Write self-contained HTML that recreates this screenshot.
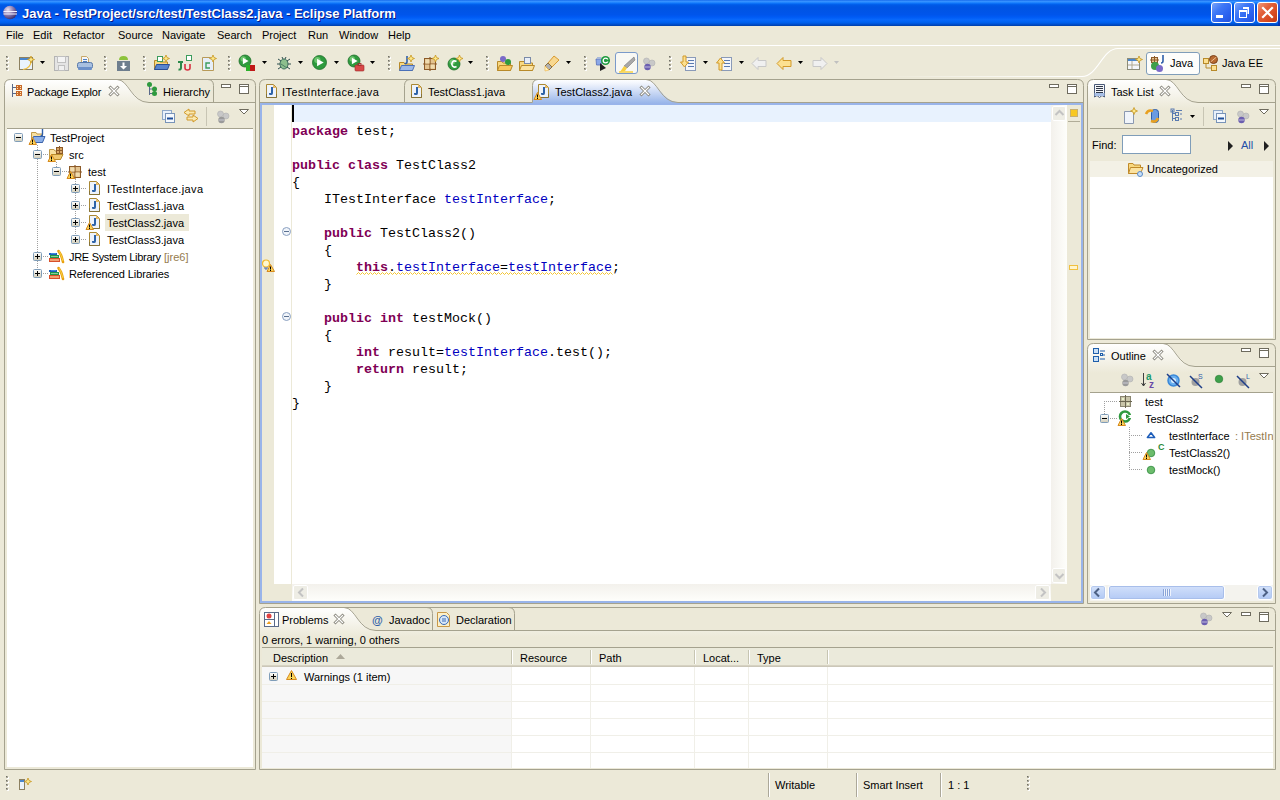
<!DOCTYPE html>
<html><head><meta charset="utf-8"><style>
*{box-sizing:border-box}
html,body{margin:0;padding:0}
body{width:1280px;height:800px;position:relative;overflow:hidden;background:#ECE9D8;font-family:"Liberation Sans",sans-serif;font-size:11px;color:#000}
.a{position:absolute}
svg.a{overflow:visible}
.t{position:absolute;white-space:nowrap;line-height:13px}
.m{position:absolute;white-space:pre;font-family:"Liberation Mono",monospace;font-size:13.33px;line-height:17px}
.kw{color:#7F0055;font-weight:bold}
.fld{color:#0000C0}
</style></head><body>
<div class="a" style="left:0;top:0;width:1280px;height:26px;background:linear-gradient(to bottom,#0A5FE8 0%,#3D95FF 4%,#2A8CFF 8%,#127AFC 12%,#0262EE 16%,#0057E5 22%,#0054E3 30%,#0055EB 56%,#005BF5 66%,#0868FC 76%,#0062EF 86%,#0054D8 92%,#0048C0 96%,#0040A8 100%)"></div>
<div class="t" style="left:22px;top:7px;font-size:13px;font-weight:bold;color:#fff;text-shadow:1px 1px 0 #0A1883">Java - TestProject/src/test/TestClass2.java - Eclipse Platform</div>
<div class="a" style="left:1211px;top:2px;width:21px;height:21px;border:1px solid #fff;border-radius:3px;background:linear-gradient(135deg,#7AA4FA 0%,#3E78F6 35%,#2A62F0 70%,#2452DC 100%)"></div>
<div class="a" style="left:1234px;top:2px;width:21px;height:21px;border:1px solid #fff;border-radius:3px;background:linear-gradient(135deg,#7AA4FA 0%,#3E78F6 35%,#2A62F0 70%,#2452DC 100%)"></div>
<div class="a" style="left:1257px;top:2px;width:21px;height:21px;border:1px solid #fff;border-radius:3px;background:linear-gradient(135deg,#F0987A 0%,#E2623C 35%,#D84A22 70%,#C23A14 100%)"></div>
<div class="a" style="left:1216px;top:15px;width:7px;height:3px;background:#fff"></div>
<svg class="a" style="left:1239px;top:7px;" width="10" height="11" viewBox="0 0 10 11"><path d="M4,0 H10 V7 H8.5 V2 H4 Z" fill="#fff"/><path d="M0,3 H8 V11 H0 Z M1,5 V10 H7 V5 Z" fill="#fff" fill-rule="evenodd"/></svg>
<svg class="a" style="left:1262px;top:7px;" width="11" height="11" viewBox="0 0 11 11"><path d="M1,1 L10,10 M10,1 L1,10" stroke="#fff" stroke-width="2.2" stroke-linecap="square"/></svg>
<div class="a" style="left:1278px;top:0px;width:2px;height:26px;background:linear-gradient(to bottom,#3A70E8,#0030B0)"></div>
<div class="t" style="left:6px;top:29px;">File</div>
<div class="t" style="left:33px;top:29px;">Edit</div>
<div class="t" style="left:63px;top:29px;">Refactor</div>
<div class="t" style="left:118px;top:29px;">Source</div>
<div class="t" style="left:162px;top:29px;">Navigate</div>
<div class="t" style="left:217px;top:29px;">Search</div>
<div class="t" style="left:262px;top:29px;">Project</div>
<div class="t" style="left:308px;top:29px;">Run</div>
<div class="t" style="left:339px;top:29px;">Window</div>
<div class="t" style="left:388px;top:29px;">Help</div>
<div class="a" style="left:0px;top:45px;width:1280px;height:1px;background:#fff"></div>
<svg class="a" style="left:4px;top:79px;" width="252" height="691" viewBox="0 0 252 691"><defs><linearGradient id="g479" x1="0" y1="0" x2="0" y2="1"><stop offset="0" stop-color="#FFFFFF"/><stop offset="1" stop-color="#ECE9D8"/></linearGradient></defs><path d="M0.5,691 V6.5 Q0.5,0.5 6.5,0.5 H245.5 Q251.5,0.5 251.5,6.5 V691" fill="#ECE9D8" stroke="none"/><path d="M0.5,30 V6.5 Q0.5,0.5 6.5,0.5 H113 C125,0.5 127,21 145,23.5 H251.5 V30 H0.5 Z" fill="url(#g479)" stroke="none"/><path d="M0.5,690.5 V6.5 Q0.5,0.5 6.5,0.5 H245.5 Q251.5,0.5 251.5,6.5 V690.5 H0.5" fill="none" stroke="#A5A28E"/><path d="M113,0.5 C125,0.5 127,23.5 145,23.5 H251.5" fill="none" stroke="#A5A28E"/><path d="M203.5,0.5 Q209.5,0.5 209.5,6.5 V23" fill="none" stroke="#A5A28E"/></svg>
<div class="a" style="left:7px;top:128px;width:246px;height:1px;background:#A5A28E"></div>
<div class="a" style="left:7px;top:129px;width:246px;height:638px;background:#fff"></div>
<svg class="a" style="left:259px;top:79px;" width="825" height="525" viewBox="0 0 825 525"><defs><linearGradient id="g25979" x1="0" y1="0" x2="0" y2="1"><stop offset="0" stop-color="#FFFFFF"/><stop offset="0.15" stop-color="#F3F6FD"/><stop offset="1" stop-color="#99B6EA"/></linearGradient></defs><path d="M0.5,525 V6.5 Q0.5,0.5 6.5,0.5 H818.5 Q824.5,0.5 824.5,6.5 V525" fill="#ECE9D8" stroke="none"/><path d="M273.5,24 V6.5 Q273.5,0.5 279.5,0.5 H387 C399,0.5 401,21 419,23.5 V24 Z" fill="url(#g25979)" stroke="none"/><path d="M0.5,524.5 V6.5 Q0.5,0.5 6.5,0.5 H818.5 Q824.5,0.5 824.5,6.5 V524.5 H0.5" fill="none" stroke="#A5A28E"/><path d="M387,0.5 C399,0.5 401,23.5 419,23.5 H824.5" fill="none" stroke="#A5A28E"/><path d="M0.5,23.5 H273.5 V6.5 Q273.5,0.5 279.5,0.5" fill="none" stroke="#A5A28E"/><path d="M145.5,23 V6.5 Q145.5,0.5 151.5,0.5" fill="none" stroke="#A5A28E"/></svg>
<div class="a" style="left:260px;top:103px;width:823px;height:500px;background:#99B4EA"></div>
<div class="a" style="left:262px;top:105px;width:819px;height:496px;background:#fff"></div>
<svg class="a" style="left:1087px;top:79px;" width="189" height="261" viewBox="0 0 189 261"><defs><linearGradient id="g108779" x1="0" y1="0" x2="0" y2="1"><stop offset="0" stop-color="#FFFFFF"/><stop offset="1" stop-color="#ECE9D8"/></linearGradient></defs><path d="M0.5,261 V6.5 Q0.5,0.5 6.5,0.5 H182.5 Q188.5,0.5 188.5,6.5 V261" fill="#ECE9D8" stroke="none"/><path d="M0.5,30 V6.5 Q0.5,0.5 6.5,0.5 H79 C91,0.5 93,21 111,23.5 H188.5 V30 H0.5 Z" fill="url(#g108779)" stroke="none"/><path d="M0.5,260.5 V6.5 Q0.5,0.5 6.5,0.5 H182.5 Q188.5,0.5 188.5,6.5 V260.5 H0.5" fill="none" stroke="#A5A28E"/><path d="M79,0.5 C91,0.5 93,23.5 111,23.5 H188.5" fill="none" stroke="#A5A28E"/></svg>
<svg class="a" style="left:1087px;top:343px;" width="189" height="261" viewBox="0 0 189 261"><defs><linearGradient id="g1087343" x1="0" y1="0" x2="0" y2="1"><stop offset="0" stop-color="#FFFFFF"/><stop offset="1" stop-color="#ECE9D8"/></linearGradient></defs><path d="M0.5,261 V6.5 Q0.5,0.5 6.5,0.5 H182.5 Q188.5,0.5 188.5,6.5 V261" fill="#ECE9D8" stroke="none"/><path d="M0.5,30 V6.5 Q0.5,0.5 6.5,0.5 H76 C88,0.5 90,21 108,23.5 H188.5 V30 H0.5 Z" fill="url(#g1087343)" stroke="none"/><path d="M0.5,260.5 V6.5 Q0.5,0.5 6.5,0.5 H182.5 Q188.5,0.5 188.5,6.5 V260.5 H0.5" fill="none" stroke="#A5A28E"/><path d="M76,0.5 C88,0.5 90,23.5 108,23.5 H188.5" fill="none" stroke="#A5A28E"/></svg>
<svg class="a" style="left:259px;top:607px;" width="1017" height="163" viewBox="0 0 1017 163"><defs><linearGradient id="g259607" x1="0" y1="0" x2="0" y2="1"><stop offset="0" stop-color="#FFFFFF"/><stop offset="1" stop-color="#ECE9D8"/></linearGradient></defs><path d="M0.5,163 V6.5 Q0.5,0.5 6.5,0.5 H1010.5 Q1016.5,0.5 1016.5,6.5 V163" fill="#ECE9D8" stroke="none"/><path d="M0.5,30 V6.5 Q0.5,0.5 6.5,0.5 H85 C97,0.5 99,21 117,23.5 H1016.5 V30 H0.5 Z" fill="url(#g259607)" stroke="none"/><path d="M0.5,162.5 V6.5 Q0.5,0.5 6.5,0.5 H1010.5 Q1016.5,0.5 1016.5,6.5 V162.5 H0.5" fill="none" stroke="#A5A28E"/><path d="M85,0.5 C97,0.5 99,23.5 117,23.5 H1016.5" fill="none" stroke="#A5A28E"/><path d="M167.5,0.5 Q173.5,0.5 173.5,6.5 V23" fill="none" stroke="#A5A28E"/><path d="M249.5,0.5 Q255.5,0.5 255.5,6.5 V23" fill="none" stroke="#A5A28E"/></svg>
<svg class="a" style="left:6px;top:56px;" width="3" height="15" viewBox="0 0 3 15"><rect x="1" y="1" width="2" height="2" fill="#FFFFFF"/><rect x="0" y="0" width="2" height="2" fill="#A8A596"/><rect x="0" y="0" width="1" height="1" fill="#707068"/><rect x="1" y="5" width="2" height="2" fill="#FFFFFF"/><rect x="0" y="4" width="2" height="2" fill="#A8A596"/><rect x="0" y="4" width="1" height="1" fill="#707068"/><rect x="1" y="9" width="2" height="2" fill="#FFFFFF"/><rect x="0" y="8" width="2" height="2" fill="#A8A596"/><rect x="0" y="8" width="1" height="1" fill="#707068"/><rect x="1" y="13" width="2" height="2" fill="#FFFFFF"/><rect x="0" y="12" width="2" height="2" fill="#A8A596"/><rect x="0" y="12" width="1" height="1" fill="#707068"/></svg>
<svg class="a" style="left:104px;top:56px;" width="3" height="15" viewBox="0 0 3 15"><rect x="1" y="1" width="2" height="2" fill="#FFFFFF"/><rect x="0" y="0" width="2" height="2" fill="#A8A596"/><rect x="0" y="0" width="1" height="1" fill="#707068"/><rect x="1" y="5" width="2" height="2" fill="#FFFFFF"/><rect x="0" y="4" width="2" height="2" fill="#A8A596"/><rect x="0" y="4" width="1" height="1" fill="#707068"/><rect x="1" y="9" width="2" height="2" fill="#FFFFFF"/><rect x="0" y="8" width="2" height="2" fill="#A8A596"/><rect x="0" y="8" width="1" height="1" fill="#707068"/><rect x="1" y="13" width="2" height="2" fill="#FFFFFF"/><rect x="0" y="12" width="2" height="2" fill="#A8A596"/><rect x="0" y="12" width="1" height="1" fill="#707068"/></svg>
<svg class="a" style="left:143px;top:56px;" width="3" height="15" viewBox="0 0 3 15"><rect x="1" y="1" width="2" height="2" fill="#FFFFFF"/><rect x="0" y="0" width="2" height="2" fill="#A8A596"/><rect x="0" y="0" width="1" height="1" fill="#707068"/><rect x="1" y="5" width="2" height="2" fill="#FFFFFF"/><rect x="0" y="4" width="2" height="2" fill="#A8A596"/><rect x="0" y="4" width="1" height="1" fill="#707068"/><rect x="1" y="9" width="2" height="2" fill="#FFFFFF"/><rect x="0" y="8" width="2" height="2" fill="#A8A596"/><rect x="0" y="8" width="1" height="1" fill="#707068"/><rect x="1" y="13" width="2" height="2" fill="#FFFFFF"/><rect x="0" y="12" width="2" height="2" fill="#A8A596"/><rect x="0" y="12" width="1" height="1" fill="#707068"/></svg>
<svg class="a" style="left:228px;top:56px;" width="3" height="15" viewBox="0 0 3 15"><rect x="1" y="1" width="2" height="2" fill="#FFFFFF"/><rect x="0" y="0" width="2" height="2" fill="#A8A596"/><rect x="0" y="0" width="1" height="1" fill="#707068"/><rect x="1" y="5" width="2" height="2" fill="#FFFFFF"/><rect x="0" y="4" width="2" height="2" fill="#A8A596"/><rect x="0" y="4" width="1" height="1" fill="#707068"/><rect x="1" y="9" width="2" height="2" fill="#FFFFFF"/><rect x="0" y="8" width="2" height="2" fill="#A8A596"/><rect x="0" y="8" width="1" height="1" fill="#707068"/><rect x="1" y="13" width="2" height="2" fill="#FFFFFF"/><rect x="0" y="12" width="2" height="2" fill="#A8A596"/><rect x="0" y="12" width="1" height="1" fill="#707068"/></svg>
<svg class="a" style="left:388px;top:56px;" width="3" height="15" viewBox="0 0 3 15"><rect x="1" y="1" width="2" height="2" fill="#FFFFFF"/><rect x="0" y="0" width="2" height="2" fill="#A8A596"/><rect x="0" y="0" width="1" height="1" fill="#707068"/><rect x="1" y="5" width="2" height="2" fill="#FFFFFF"/><rect x="0" y="4" width="2" height="2" fill="#A8A596"/><rect x="0" y="4" width="1" height="1" fill="#707068"/><rect x="1" y="9" width="2" height="2" fill="#FFFFFF"/><rect x="0" y="8" width="2" height="2" fill="#A8A596"/><rect x="0" y="8" width="1" height="1" fill="#707068"/><rect x="1" y="13" width="2" height="2" fill="#FFFFFF"/><rect x="0" y="12" width="2" height="2" fill="#A8A596"/><rect x="0" y="12" width="1" height="1" fill="#707068"/></svg>
<svg class="a" style="left:486px;top:56px;" width="3" height="15" viewBox="0 0 3 15"><rect x="1" y="1" width="2" height="2" fill="#FFFFFF"/><rect x="0" y="0" width="2" height="2" fill="#A8A596"/><rect x="0" y="0" width="1" height="1" fill="#707068"/><rect x="1" y="5" width="2" height="2" fill="#FFFFFF"/><rect x="0" y="4" width="2" height="2" fill="#A8A596"/><rect x="0" y="4" width="1" height="1" fill="#707068"/><rect x="1" y="9" width="2" height="2" fill="#FFFFFF"/><rect x="0" y="8" width="2" height="2" fill="#A8A596"/><rect x="0" y="8" width="1" height="1" fill="#707068"/><rect x="1" y="13" width="2" height="2" fill="#FFFFFF"/><rect x="0" y="12" width="2" height="2" fill="#A8A596"/><rect x="0" y="12" width="1" height="1" fill="#707068"/></svg>
<svg class="a" style="left:584px;top:56px;" width="3" height="15" viewBox="0 0 3 15"><rect x="1" y="1" width="2" height="2" fill="#FFFFFF"/><rect x="0" y="0" width="2" height="2" fill="#A8A596"/><rect x="0" y="0" width="1" height="1" fill="#707068"/><rect x="1" y="5" width="2" height="2" fill="#FFFFFF"/><rect x="0" y="4" width="2" height="2" fill="#A8A596"/><rect x="0" y="4" width="1" height="1" fill="#707068"/><rect x="1" y="9" width="2" height="2" fill="#FFFFFF"/><rect x="0" y="8" width="2" height="2" fill="#A8A596"/><rect x="0" y="8" width="1" height="1" fill="#707068"/><rect x="1" y="13" width="2" height="2" fill="#FFFFFF"/><rect x="0" y="12" width="2" height="2" fill="#A8A596"/><rect x="0" y="12" width="1" height="1" fill="#707068"/></svg>
<svg class="a" style="left:669px;top:56px;" width="3" height="15" viewBox="0 0 3 15"><rect x="1" y="1" width="2" height="2" fill="#FFFFFF"/><rect x="0" y="0" width="2" height="2" fill="#A8A596"/><rect x="0" y="0" width="1" height="1" fill="#707068"/><rect x="1" y="5" width="2" height="2" fill="#FFFFFF"/><rect x="0" y="4" width="2" height="2" fill="#A8A596"/><rect x="0" y="4" width="1" height="1" fill="#707068"/><rect x="1" y="9" width="2" height="2" fill="#FFFFFF"/><rect x="0" y="8" width="2" height="2" fill="#A8A596"/><rect x="0" y="8" width="1" height="1" fill="#707068"/><rect x="1" y="13" width="2" height="2" fill="#FFFFFF"/><rect x="0" y="12" width="2" height="2" fill="#A8A596"/><rect x="0" y="12" width="1" height="1" fill="#707068"/></svg>
<svg class="a" style="left:19px;top:56px;" width="16" height="16" viewBox="0 0 16 16"><rect x="0.5" y="1.5" width="13" height="12" fill="#EAF3FC" stroke="#8C8060"/><rect x="1" y="2" width="12" height="2" fill="#4A86CC"/><path d="M12,5 Q12,12 4,13.5" fill="none" stroke="#F0C040" stroke-width="1.2"/><path d="M12,0.0 L13,2.5 L15.5,3.5 L13,4.5 L12,7.0 L11,4.5 L8.5,3.5 L11,2.5 Z" fill="#FCE88A" stroke="#C8961E" stroke-width="0.8"/></svg>
<svg class="a" style="left:40px;top:61px;" width="5" height="3" viewBox="0 0 5 3"><path d="M0,0 H5 L2.5,3 Z" fill="#000"/></svg>
<svg class="a" style="left:54px;top:56px;" width="16" height="16" viewBox="0 0 16 16"><rect x="0.5" y="0.5" width="14" height="14" fill="#E4E4E4" stroke="#B4B4B4"/><rect x="3.5" y="0.5" width="8" height="6" fill="#F4F4F4" stroke="#C0C0C0"/><rect x="4.5" y="9.5" width="6" height="5" fill="#F0F0F0" stroke="#C0C0C0"/></svg>
<svg class="a" style="left:77px;top:56px;" width="16" height="16" viewBox="0 0 16 16"><path d="M4.5,0.5 H9.5 L11.5,2.5 V7.5 H4.5 Z" fill="#F4F6FA" stroke="#C8A868"/><rect x="6" y="3" width="4" height="1" fill="#5080C0"/><rect x="6" y="5" width="4" height="1" fill="#5080C0"/><rect x="0.5" y="6.5" width="15" height="6" rx="2" fill="#A8C0E0" stroke="#5878A8"/><rect x="1" y="11" width="14" height="3" rx="1" fill="#6C90C8"/></svg>
<svg class="a" style="left:117px;top:55px;" width="16" height="16" viewBox="0 0 16 16"><path d="M2,5 Q2,1 6.5,1 Q11,1 11,5 Z" fill="#8DC33C"/><rect x="0" y="6" width="13" height="10" fill="#6E7E8E"/><path d="M5.5,7.5 H7.5 V11 H10 L6.5,14.5 L3,11 H5.5 Z" fill="#FFF"/></svg>
<svg class="a" style="left:154px;top:55px;" width="16" height="16" viewBox="0 0 16 16"><path d="M0.5,5.5 H5 L6,7 H13.5 V14.5 H0.5 Z" fill="#F8D880" stroke="#B88A2A"/><path d="M2.5,9.5 H15.5 L13.5,14.5 H0.5 Z" fill="#5884CC" stroke="#2A4E98"/><rect x="3.5" y="1.5" width="5" height="5" fill="#FFF" stroke="#3C9C5C"/><path d="M12,0.0 L13,2.5 L15.5,3.5 L13,4.5 L12,7.0 L11,4.5 L8.5,3.5 L11,2.5 Z" fill="#FCE88A" stroke="#C8961E" stroke-width="0.8"/></svg>
<svg class="a" style="left:177px;top:55px;" width="16" height="16" viewBox="0 0 16 16"><path d="M1,7 H6 M4,7 V13 Q4,15 1.5,14.5" fill="none" stroke="#2A8A4A" stroke-width="2"/><path d="M8,9 V13 Q8,15 10.5,15 Q13,15 13,13 V9" fill="none" stroke="#D83040" stroke-width="1.6"/><rect x="9.5" y="0.5" width="5" height="5" fill="#FFF" stroke="#3C9C5C"/></svg>
<svg class="a" style="left:202px;top:55px;" width="16" height="16" viewBox="0 0 16 16"><path d="M0.5,2.5 H8.5 L11.5,5.5 V15.5 H0.5 Z" fill="#E6EEF8" stroke="#B89A58"/><path d="M8,8 H4 V13 H8" fill="none" stroke="#3C9C5C" stroke-width="1.4"/><path d="M11,0.0 L12,2.5 L14.5,3.5 L12,4.5 L11,7.0 L10,4.5 L7.5,3.5 L10,2.5 Z" fill="#FCE88A" stroke="#C8961E" stroke-width="0.8"/></svg>
<svg class="a" style="left:239px;top:55px;" width="16" height="16" viewBox="0 0 16 16"><circle cx="6" cy="6" r="6" fill="#2E9A3E" stroke="#1E6E2A" stroke-width="0.8"/><circle cx="4.2" cy="3.9000000000000004" r="2.7" fill="#7CD07A" opacity="0.8"/><path d="M3.9000000000000004,2.6999999999999997 L9.6,6 L3.9000000000000004,9.3 Z" fill="#FFF"/><rect x="7" y="10" width="5" height="6" fill="#2AB02A"/><rect x="11" y="10" width="5" height="6" fill="#C01818"/></svg>
<svg class="a" style="left:262px;top:61px;" width="5" height="3" viewBox="0 0 5 3"><path d="M0,0 H5 L2.5,3 Z" fill="#000"/></svg>
<svg class="a" style="left:276px;top:55px;" width="16" height="16" viewBox="0 0 16 16"><ellipse cx="8" cy="9" rx="4" ry="5" fill="#8DBF8D" stroke="#3C6E5C"/><path d="M2,4 L5,6 M14,4 L11,6 M1,9 H4 M15,9 H12 M2,14 L5,12 M14,14 L11,12 M6,2 L7,4 M10,2 L9,4" stroke="#2E4E4E" stroke-width="1"/><path d="M5,9 L11,13" stroke="#3C6E5C" stroke-width="0.8"/></svg>
<svg class="a" style="left:298px;top:61px;" width="5" height="3" viewBox="0 0 5 3"><path d="M0,0 H5 L2.5,3 Z" fill="#000"/></svg>
<svg class="a" style="left:312px;top:55px;" width="16" height="16" viewBox="0 0 16 16"><circle cx="7.5" cy="7.5" r="7" fill="#2E9A3E" stroke="#1E6E2A" stroke-width="0.8"/><circle cx="5.4" cy="5.050000000000001" r="3.15" fill="#7CD07A" opacity="0.8"/><path d="M5.050000000000001,3.6499999999999995 L11.7,7.5 L5.050000000000001,11.350000000000001 Z" fill="#FFF"/></svg>
<svg class="a" style="left:334px;top:61px;" width="5" height="3" viewBox="0 0 5 3"><path d="M0,0 H5 L2.5,3 Z" fill="#000"/></svg>
<svg class="a" style="left:348px;top:55px;" width="16" height="16" viewBox="0 0 16 16"><circle cx="6" cy="6" r="6" fill="#2E9A3E" stroke="#1E6E2A" stroke-width="0.8"/><circle cx="4.2" cy="3.9000000000000004" r="2.7" fill="#7CD07A" opacity="0.8"/><path d="M3.9000000000000004,2.6999999999999997 L9.6,6 L3.9000000000000004,9.3 Z" fill="#FFF"/><rect x="7" y="10" width="9" height="6" rx="1" fill="#D84848" stroke="#A02828" stroke-width="0.6"/><rect x="10" y="8.5" width="3" height="2" fill="none" stroke="#A02828" stroke-width="0.8"/></svg>
<svg class="a" style="left:370px;top:61px;" width="5" height="3" viewBox="0 0 5 3"><path d="M0,0 H5 L2.5,3 Z" fill="#000"/></svg>
<svg class="a" style="left:399px;top:55px;" width="16" height="16" viewBox="0 0 16 16"><path d="M0.5,7.5 H5 L6,9 H13.5 V15.5 H0.5 Z" fill="#F8D880" stroke="#B88A2A"/><path d="M2.5,10.5 H15.5 L13.5,15.5 H0.5 Z" fill="#9CB8E8" stroke="#4A70B8"/><path d="M8,1 V7 Q8,8.5 6.5,8.5 H5.5" fill="none" stroke="#2E5EA8" stroke-width="1.6"/><path d="M12,0.0 L13,2.5 L15.5,3.5 L13,4.5 L12,7.0 L11,4.5 L8.5,3.5 L11,2.5 Z" fill="#FCE88A" stroke="#C8961E" stroke-width="0.8"/></svg>
<svg class="a" style="left:423px;top:55px;" width="16" height="16" viewBox="0 0 16 16"><rect x="1.5" y="3.5" width="11" height="11" fill="#E4C490" stroke="#8C5A28"/><path d="M7,2 V16 M0,9 H14" stroke="#8C5A28" stroke-width="1.2"/><rect x="2.5" y="4.5" width="4" height="4" fill="#F0DCB0"/><rect x="7.5" y="9.5" width="4" height="4" fill="#F0DCB0"/><path d="M12.5,0.0 L13.5,2.5 L16.0,3.5 L13.5,4.5 L12.5,7.0 L11.5,4.5 L9.0,3.5 L11.5,2.5 Z" fill="#FCE88A" stroke="#C8961E" stroke-width="0.8"/></svg>
<svg class="a" style="left:447px;top:55px;" width="16" height="16" viewBox="0 0 16 16"><circle cx="7" cy="9" r="6" fill="#2E9A3E" stroke="#1E6E2A" stroke-width="0.8"/><circle cx="5.2" cy="6.9" r="2.7" fill="#7CD07A" opacity="0.8"/><path d="M9.5,6.5 Q7,5 5.5,7 Q4,9 5.5,11 Q7,13 9.5,11.5" fill="none" stroke="#FFF" stroke-width="1.6"/><path d="M12.5,0.0 L13.5,2.5 L16.0,3.5 L13.5,4.5 L12.5,7.0 L11.5,4.5 L9.0,3.5 L11.5,2.5 Z" fill="#FCE88A" stroke="#C8961E" stroke-width="0.8"/></svg>
<svg class="a" style="left:468px;top:61px;" width="5" height="3" viewBox="0 0 5 3"><path d="M0,0 H5 L2.5,3 Z" fill="#000"/></svg>
<svg class="a" style="left:497px;top:55px;" width="16" height="16" viewBox="0 0 16 16"><path d="M0.5,6.5 H5 L6,8 H13.5 V15.5 H0.5 Z" fill="#F8D880" stroke="#B88A2A"/><path d="M2.5,10.5 H15.5 L13.5,15.5 H0.5 Z" fill="#F8C860" stroke="#B88A2A"/><circle cx="6" cy="4" r="3" fill="#7A6AC8"/><circle cx="11" cy="7" r="3" fill="#2E9A3E"/></svg>
<svg class="a" style="left:519px;top:55px;" width="16" height="16" viewBox="0 0 16 16"><path d="M0.5,6.5 H5 L6,8 H13.5 V15.5 H0.5 Z" fill="#F8D880" stroke="#B88A2A"/><path d="M2.5,10.5 H15.5 L13.5,15.5 H0.5 Z" fill="#FBE2A0" stroke="#B88A2A"/><rect x="5.5" y="2.5" width="6" height="6" fill="#E8EEF8" stroke="#7A8AA8"/></svg>
<svg class="a" style="left:544px;top:55px;" width="16" height="16" viewBox="0 0 16 16"><path d="M10,1 L15,5 L8,12 L4,8 Z" fill="#F8D890" stroke="#D89A30"/><path d="M4,8 L8,12 L5,15 L1,11 Z" fill="#B0B0B0" stroke="#8A7040"/><path d="M1,11 L5,15 L1,16 Z" fill="#FFF4C0" stroke="#F0B040" stroke-width="0.6"/></svg>
<svg class="a" style="left:566px;top:61px;" width="5" height="3" viewBox="0 0 5 3"><path d="M0,0 H5 L2.5,3 Z" fill="#000"/></svg>
<svg class="a" style="left:595px;top:55px;" width="16" height="16" viewBox="0 0 16 16"><path d="M1,4 H7 L6.5,10 H1.5 Z" fill="#8AA8E8" stroke="#5A70B8" stroke-width="0.8"/><rect x="2" y="2" width="4" height="2" fill="#A8B8D8"/><path d="M5,8 L11,13 L5,16 Z" fill="#202020"/><circle cx="10.5" cy="5.5" r="4.5" fill="#1E9A3E"/><circle cx="10.5" cy="5.5" r="2.3" fill="none" stroke="#FFF" stroke-width="1.3"/><rect x="11" y="4.5" width="4" height="2" fill="#1E9A3E"/></svg>
<div class="a" style="left:615px;top:52px;width:23px;height:22px;border:1px solid #7A9ACA;border-radius:3px;background:#F8F8F4"></div>
<svg class="a" style="left:619px;top:56px;" width="16" height="16" viewBox="0 0 16 16"><path d="M15,1 L16,4 L8,12 L5,10 Z" fill="#A8A8A8" stroke="#787878" stroke-width="0.6"/><path d="M5,10 L8,12 L6,15 L1,16 Z" fill="#F8D040"/><path d="M0,16 H14" stroke="#F8D040" stroke-width="1.5"/></svg>
<svg class="a" style="left:642px;top:57px;" width="16" height="16" viewBox="0 0 16 16"><circle cx="4.5" cy="4" r="3" fill="#C8C8C8" stroke="#B0B0B0" stroke-width="0.6"/><circle cx="10" cy="6" r="3" fill="#C8C8C8" stroke="#B0B0B0" stroke-width="0.6"/><circle cx="5.5" cy="10" r="3.2" fill="#6C5FB0"/><rect x="3" y="9.5" width="5" height="1" fill="#E0E0F0" opacity="0.7"/></svg>
<svg class="a" style="left:680px;top:55px;" width="16" height="16" viewBox="0 0 16 16"><rect x="5.5" y="2.5" width="10" height="13" fill="#F4F6FA" stroke="#8A9AB8"/><rect x="8" y="5" width="6" height="1" fill="#5A7AB0"/><rect x="8" y="8" width="6" height="1" fill="#5A7AB0"/><rect x="8" y="11" width="6" height="1" fill="#5A7AB0"/><path d="M3,1 H6 V7 H8.5 L4.5,12 L0.5,7 H3 Z" fill="#FCE090" stroke="#D29A2A"/></svg>
<svg class="a" style="left:703px;top:61px;" width="5" height="3" viewBox="0 0 5 3"><path d="M0,0 H5 L2.5,3 Z" fill="#000"/></svg>
<svg class="a" style="left:716px;top:55px;" width="16" height="16" viewBox="0 0 16 16"><rect x="5.5" y="2.5" width="10" height="13" fill="#F4F6FA" stroke="#8A9AB8"/><rect x="8" y="5" width="6" height="1" fill="#5A7AB0"/><rect x="8" y="8" width="6" height="1" fill="#5A7AB0"/><rect x="8" y="11" width="6" height="1" fill="#5A7AB0"/><path d="M3,15 H6 V8 H8.5 L4.5,3 L0.5,8 H3 Z" fill="#FCE090" stroke="#D29A2A"/></svg>
<svg class="a" style="left:739px;top:61px;" width="5" height="3" viewBox="0 0 5 3"><path d="M0,0 H5 L2.5,3 Z" fill="#000"/></svg>
<svg class="a" style="left:751px;top:56px;" width="16" height="16" viewBox="0 0 16 16"><path d="M7,1.5 L1,7.5 L7,13.5 V10.5 H15 V4.5 H7 Z" fill="#F0F0F0" stroke="#C8C8C8" stroke-linejoin="round"/></svg>
<svg class="a" style="left:776px;top:56px;" width="16" height="16" viewBox="0 0 16 16"><path d="M7,1.5 L1,7.5 L7,13.5 V10.5 H15 V4.5 H7 Z" fill="#FCE090" stroke="#D29A2A" stroke-linejoin="round"/></svg>
<svg class="a" style="left:798px;top:61px;" width="5" height="3" viewBox="0 0 5 3"><path d="M0,0 H5 L2.5,3 Z" fill="#000"/></svg>
<svg class="a" style="left:812px;top:56px;" width="16" height="16" viewBox="0 0 16 16"><path d="M9,1.5 L15,7.5 L9,13.5 V10.5 H1 V4.5 H9 Z" fill="#F0F0F0" stroke="#C8C8C8" stroke-linejoin="round"/></svg>
<svg class="a" style="left:834px;top:61px;" width="5" height="3" viewBox="0 0 5 3"><path d="M0,0 H5 L2.5,3 Z" fill="#C0C0C0"/></svg>
<svg class="a" style="left:860px;top:46px;" width="420" height="33" viewBox="0 0 420 33"><defs><linearGradient id="pfade" x1="0" y1="0" x2="1" y2="0"><stop offset="0" stop-color="#FFF" stop-opacity="0"/><stop offset="1" stop-color="#FFF" stop-opacity="1"/></linearGradient></defs><rect x="20" y="30" width="202" height="1" fill="url(#pfade)"/><path d="M222,30.5 C238,30.5 242,2.5 258,2.5 H420" fill="none" stroke="#FFFFFF" stroke-width="1.2"/></svg>
<svg class="a" style="left:1127px;top:56px;" width="16" height="16" viewBox="0 0 16 16"><rect x="0.5" y="2.5" width="12" height="11" fill="#F4F6FA" stroke="#8C8C78"/><rect x="1" y="3" width="11" height="2" fill="#4A86CC"/><path d="M5,5 V13 M1,9 H12" stroke="#B0A890"/><path d="M12,0.0 L13,2.5 L15.5,3.5 L13,4.5 L12,7.0 L11,4.5 L8.5,3.5 L11,2.5 Z" fill="#FCE88A" stroke="#C8961E" stroke-width="0.8"/></svg>
<div class="a" style="left:1146px;top:52px;width:54px;height:23px;border:1px solid #7F9DB9;border-radius:3px;background:#FDFDFB"></div>
<svg class="a" style="left:1150px;top:55px;" width="16" height="16" viewBox="0 0 16 16"><rect x="1.5" y="2.5" width="6" height="5" fill="#E4C490" stroke="#8C5A28"/><path d="M4.5,1 V8 M0,5 H9" stroke="#8C5A28"/><circle cx="5" cy="11" r="4" fill="#3EA04A"/><circle cx="9.5" cy="13.5" r="3.5" fill="#7A6AC8"/><path d="M13,0 V6 Q13,8 11,8" fill="none" stroke="#2E5EA8" stroke-width="1.6"/></svg>
<div class="t" style="left:1170px;top:57px;">Java</div>
<svg class="a" style="left:1203px;top:55px;" width="16" height="16" viewBox="0 0 16 16"><rect x="0.5" y="3.5" width="5" height="5" fill="#FCE090" stroke="#B88A2A"/><rect x="8.5" y="10.5" width="5" height="5" fill="#FCE090" stroke="#B88A2A"/><path d="M3,9 V13 H8" stroke="#B88A2A" fill="none"/><ellipse cx="10.5" cy="4.5" rx="4" ry="4" fill="#B86A30" stroke="#7A4018"/><path d="M7.5,7 Q10.5,4.5 13.5,2" stroke="#F0C090"/></svg>
<div class="t" style="left:1222px;top:57px;">Java EE</div>
<svg class="a" style="left:12px;top:84px;" width="11" height="14" viewBox="0 0 11 14"><path d="M0.5,0 V13 M0.5,3.5 H4 M0.5,9.5 H4" stroke="#5A6A8A"/><rect x="4" y="1" width="6" height="5" fill="#C8682A"/><rect x="4" y="7" width="6" height="5" fill="#C8682A"/><rect x="5" y="2" width="1" height="1" fill="#FFE8B0"/><rect x="8" y="2" width="1" height="1" fill="#FFE8B0"/><rect x="5" y="4" width="1" height="1" fill="#FFE8B0"/><rect x="8" y="4" width="1" height="1" fill="#FFE8B0"/><rect x="5" y="8" width="1" height="1" fill="#FFE8B0"/><rect x="8" y="8" width="1" height="1" fill="#FFE8B0"/><rect x="5" y="10" width="1" height="1" fill="#FFE8B0"/><rect x="8" y="10" width="1" height="1" fill="#FFE8B0"/></svg>
<div class="t" style="left:27px;top:86px;letter-spacing:-0.2px">Package Explor</div>
<svg class="a" style="left:109px;top:86px;" width="10" height="10" viewBox="0 0 10 10"><path d="M1.5,1.5 L8.5,8.5 M8.5,1.5 L1.5,8.5" stroke="#8C8A80" stroke-width="3" stroke-linecap="square"/><path d="M1.5,1.5 L8.5,8.5 M8.5,1.5 L1.5,8.5" stroke="#FFFFFF" stroke-width="1.2" stroke-linecap="square"/></svg>
<svg class="a" style="left:147px;top:82px;" width="10" height="16" viewBox="0 0 10 16"><path d="M2.5,2 V13 M2.5,7 H6 M2.5,11.5 H6" stroke="#5A6A8A"/><circle cx="2.5" cy="2.5" r="2.5" fill="#2E9A3E"/><circle cx="7.5" cy="7" r="2.5" fill="#2E9A3E"/><circle cx="7.5" cy="11.5" r="2.5" fill="#2E9A3E"/></svg>
<div class="t" style="left:163px;top:86px;">Hierarchy</div>
<svg class="a" style="left:221px;top:84px;" width="10" height="4" viewBox="0 0 10 4"><rect x="0.5" y="0.5" width="9" height="3" fill="#FFF" stroke="#6E6B5E"/></svg>
<svg class="a" style="left:239px;top:84px;" width="10" height="10" viewBox="0 0 10 10"><rect x="0.5" y="0.5" width="9" height="9" fill="#FFF" stroke="#6E6B5E"/><rect x="1" y="2" width="8" height="1" fill="#6E6B5E"/></svg>
<svg class="a" style="left:162px;top:110px;" width="13" height="13" viewBox="0 0 13 13"><rect x="0.5" y="0.5" width="9" height="9" fill="#E8F0FA" stroke="#8FA8C8"/><rect x="3.5" y="3.5" width="9" height="9" fill="#F4F8FD" stroke="#7893B8"/><rect x="5" y="7.5" width="6" height="2" fill="#1E4E9A"/></svg>
<svg class="a" style="left:183px;top:108px;" width="16" height="16" viewBox="0 0 16 16"><path d="M6,1 L1,4.5 L6,8 V6 H12 V3 H6 Z" fill="#FBE9B0" stroke="#D29A2A"/><path d="M10,7 L15,10.5 L10,14 V12 H4 V9 H10 Z" fill="#FBE9B0" stroke="#D29A2A"/></svg>
<div class="a" style="left:206px;top:107px;width:1px;height:19px;background:#C8C5B4"></div>
<svg class="a" style="left:216px;top:110px;" width="14" height="14" viewBox="0 0 14 14"><circle cx="4.5" cy="4" r="3" fill="#C8C8C8" stroke="#B0B0B0" stroke-width="0.6"/><circle cx="10" cy="6" r="3" fill="#C8C8C8" stroke="#B0B0B0" stroke-width="0.6"/><circle cx="5.5" cy="10" r="3.2" fill="#9A9A9A"/><rect x="3" y="9.5" width="5" height="1" fill="#E0E0F0" opacity="0.7"/></svg>
<svg class="a" style="left:239px;top:109px;" width="10" height="6" viewBox="0 0 10 6"><path d="M0.5,0.5 H9.5 L5,5 Z" fill="#FFF" stroke="#6E6B5E" stroke-linejoin="round"/></svg>
<svg class="a" style="left:37px;top:145px;" width="1" height="130" viewBox="0 0 1 130"><rect x="0" y="0" width="1" height="1" fill="#A0A0A0"/><rect x="0" y="2" width="1" height="1" fill="#A0A0A0"/><rect x="0" y="4" width="1" height="1" fill="#A0A0A0"/><rect x="0" y="6" width="1" height="1" fill="#A0A0A0"/><rect x="0" y="8" width="1" height="1" fill="#A0A0A0"/><rect x="0" y="10" width="1" height="1" fill="#A0A0A0"/><rect x="0" y="12" width="1" height="1" fill="#A0A0A0"/><rect x="0" y="14" width="1" height="1" fill="#A0A0A0"/><rect x="0" y="16" width="1" height="1" fill="#A0A0A0"/><rect x="0" y="18" width="1" height="1" fill="#A0A0A0"/><rect x="0" y="20" width="1" height="1" fill="#A0A0A0"/><rect x="0" y="22" width="1" height="1" fill="#A0A0A0"/><rect x="0" y="24" width="1" height="1" fill="#A0A0A0"/><rect x="0" y="26" width="1" height="1" fill="#A0A0A0"/><rect x="0" y="28" width="1" height="1" fill="#A0A0A0"/><rect x="0" y="30" width="1" height="1" fill="#A0A0A0"/><rect x="0" y="32" width="1" height="1" fill="#A0A0A0"/><rect x="0" y="34" width="1" height="1" fill="#A0A0A0"/><rect x="0" y="36" width="1" height="1" fill="#A0A0A0"/><rect x="0" y="38" width="1" height="1" fill="#A0A0A0"/><rect x="0" y="40" width="1" height="1" fill="#A0A0A0"/><rect x="0" y="42" width="1" height="1" fill="#A0A0A0"/><rect x="0" y="44" width="1" height="1" fill="#A0A0A0"/><rect x="0" y="46" width="1" height="1" fill="#A0A0A0"/><rect x="0" y="48" width="1" height="1" fill="#A0A0A0"/><rect x="0" y="50" width="1" height="1" fill="#A0A0A0"/><rect x="0" y="52" width="1" height="1" fill="#A0A0A0"/><rect x="0" y="54" width="1" height="1" fill="#A0A0A0"/><rect x="0" y="56" width="1" height="1" fill="#A0A0A0"/><rect x="0" y="58" width="1" height="1" fill="#A0A0A0"/><rect x="0" y="60" width="1" height="1" fill="#A0A0A0"/><rect x="0" y="62" width="1" height="1" fill="#A0A0A0"/><rect x="0" y="64" width="1" height="1" fill="#A0A0A0"/><rect x="0" y="66" width="1" height="1" fill="#A0A0A0"/><rect x="0" y="68" width="1" height="1" fill="#A0A0A0"/><rect x="0" y="70" width="1" height="1" fill="#A0A0A0"/><rect x="0" y="72" width="1" height="1" fill="#A0A0A0"/><rect x="0" y="74" width="1" height="1" fill="#A0A0A0"/><rect x="0" y="76" width="1" height="1" fill="#A0A0A0"/><rect x="0" y="78" width="1" height="1" fill="#A0A0A0"/><rect x="0" y="80" width="1" height="1" fill="#A0A0A0"/><rect x="0" y="82" width="1" height="1" fill="#A0A0A0"/><rect x="0" y="84" width="1" height="1" fill="#A0A0A0"/><rect x="0" y="86" width="1" height="1" fill="#A0A0A0"/><rect x="0" y="88" width="1" height="1" fill="#A0A0A0"/><rect x="0" y="90" width="1" height="1" fill="#A0A0A0"/><rect x="0" y="92" width="1" height="1" fill="#A0A0A0"/><rect x="0" y="94" width="1" height="1" fill="#A0A0A0"/><rect x="0" y="96" width="1" height="1" fill="#A0A0A0"/><rect x="0" y="98" width="1" height="1" fill="#A0A0A0"/><rect x="0" y="100" width="1" height="1" fill="#A0A0A0"/><rect x="0" y="102" width="1" height="1" fill="#A0A0A0"/><rect x="0" y="104" width="1" height="1" fill="#A0A0A0"/><rect x="0" y="106" width="1" height="1" fill="#A0A0A0"/><rect x="0" y="108" width="1" height="1" fill="#A0A0A0"/><rect x="0" y="110" width="1" height="1" fill="#A0A0A0"/><rect x="0" y="112" width="1" height="1" fill="#A0A0A0"/><rect x="0" y="114" width="1" height="1" fill="#A0A0A0"/><rect x="0" y="116" width="1" height="1" fill="#A0A0A0"/><rect x="0" y="118" width="1" height="1" fill="#A0A0A0"/><rect x="0" y="120" width="1" height="1" fill="#A0A0A0"/><rect x="0" y="122" width="1" height="1" fill="#A0A0A0"/><rect x="0" y="124" width="1" height="1" fill="#A0A0A0"/><rect x="0" y="126" width="1" height="1" fill="#A0A0A0"/><rect x="0" y="128" width="1" height="1" fill="#A0A0A0"/></svg>
<svg class="a" style="left:56px;top:162px;" width="1" height="10" viewBox="0 0 1 10"><rect x="0" y="0" width="1" height="1" fill="#A0A0A0"/><rect x="0" y="2" width="1" height="1" fill="#A0A0A0"/><rect x="0" y="4" width="1" height="1" fill="#A0A0A0"/><rect x="0" y="6" width="1" height="1" fill="#A0A0A0"/><rect x="0" y="8" width="1" height="1" fill="#A0A0A0"/></svg>
<svg class="a" style="left:75px;top:179px;" width="1" height="62" viewBox="0 0 1 62"><rect x="0" y="0" width="1" height="1" fill="#A0A0A0"/><rect x="0" y="2" width="1" height="1" fill="#A0A0A0"/><rect x="0" y="4" width="1" height="1" fill="#A0A0A0"/><rect x="0" y="6" width="1" height="1" fill="#A0A0A0"/><rect x="0" y="8" width="1" height="1" fill="#A0A0A0"/><rect x="0" y="10" width="1" height="1" fill="#A0A0A0"/><rect x="0" y="12" width="1" height="1" fill="#A0A0A0"/><rect x="0" y="14" width="1" height="1" fill="#A0A0A0"/><rect x="0" y="16" width="1" height="1" fill="#A0A0A0"/><rect x="0" y="18" width="1" height="1" fill="#A0A0A0"/><rect x="0" y="20" width="1" height="1" fill="#A0A0A0"/><rect x="0" y="22" width="1" height="1" fill="#A0A0A0"/><rect x="0" y="24" width="1" height="1" fill="#A0A0A0"/><rect x="0" y="26" width="1" height="1" fill="#A0A0A0"/><rect x="0" y="28" width="1" height="1" fill="#A0A0A0"/><rect x="0" y="30" width="1" height="1" fill="#A0A0A0"/><rect x="0" y="32" width="1" height="1" fill="#A0A0A0"/><rect x="0" y="34" width="1" height="1" fill="#A0A0A0"/><rect x="0" y="36" width="1" height="1" fill="#A0A0A0"/><rect x="0" y="38" width="1" height="1" fill="#A0A0A0"/><rect x="0" y="40" width="1" height="1" fill="#A0A0A0"/><rect x="0" y="42" width="1" height="1" fill="#A0A0A0"/><rect x="0" y="44" width="1" height="1" fill="#A0A0A0"/><rect x="0" y="46" width="1" height="1" fill="#A0A0A0"/><rect x="0" y="48" width="1" height="1" fill="#A0A0A0"/><rect x="0" y="50" width="1" height="1" fill="#A0A0A0"/><rect x="0" y="52" width="1" height="1" fill="#A0A0A0"/><rect x="0" y="54" width="1" height="1" fill="#A0A0A0"/><rect x="0" y="56" width="1" height="1" fill="#A0A0A0"/><rect x="0" y="58" width="1" height="1" fill="#A0A0A0"/><rect x="0" y="60" width="1" height="1" fill="#A0A0A0"/></svg>
<svg class="a" style="left:14px;top:133px;" width="9" height="9" viewBox="0 0 9 9"><defs><linearGradient id="exg" x1="0" y1="0" x2="0" y2="1"><stop offset="0" stop-color="#FFFFFF"/><stop offset="1" stop-color="#D2CDB8"/></linearGradient></defs><rect x="0.5" y="0.5" width="8" height="8" rx="1" fill="url(#exg)" stroke="#7F9DB9"/><rect x="2" y="4" width="5" height="1" fill="#000"/></svg>
<svg class="a" style="left:29px;top:129px;" width="16" height="16" viewBox="0 0 16 16"><path d="M2.5,3.5 H7 L8,5 H13.5 V13.5 H2.5 Z" fill="#F8E0A0" stroke="#C09A48"/><path d="M4.5,7.5 H16 L13.5,13.5 H2.5 Z" fill="#8CB0E8" stroke="#3A64B0"/><path d="M13.5,0 V5 Q13.5,7 11.5,7" fill="none" stroke="#2E5EA8" stroke-width="1.4"/></svg>
<svg class="a" style="left:29px;top:137px;" width="8" height="8" viewBox="0 0 8 8"><path d="M3.5,0.5 L7.5,7.5 H0 Z" fill="#FAD45A" stroke="#D78A1E" stroke-linejoin="round"/><rect x="3" y="2.5" width="1" height="3" fill="#000"/><rect x="3" y="6" width="1" height="1" fill="#000"/></svg>
<div class="t" style="left:50px;top:132px;">TestProject</div>
<svg class="a" style="left:33px;top:150px;" width="9" height="9" viewBox="0 0 9 9"><defs><linearGradient id="exg" x1="0" y1="0" x2="0" y2="1"><stop offset="0" stop-color="#FFFFFF"/><stop offset="1" stop-color="#D2CDB8"/></linearGradient></defs><rect x="0.5" y="0.5" width="8" height="8" rx="1" fill="url(#exg)" stroke="#7F9DB9"/><rect x="2" y="4" width="5" height="1" fill="#000"/></svg>
<svg class="a" style="left:43px;top:154px;" width="6" height="1" viewBox="0 0 6 1"><rect x="0" y="0" width="1" height="1" fill="#A0A0A0"/><rect x="2" y="0" width="1" height="1" fill="#A0A0A0"/><rect x="4" y="0" width="1" height="1" fill="#A0A0A0"/></svg>
<svg class="a" style="left:48px;top:146px;" width="16" height="16" viewBox="0 0 16 16"><path d="M1.5,3.5 H6 L7,5 H12.5 V13.5 H1.5 Z" fill="#F8E0A0" stroke="#C09A48"/><path d="M3.5,8.5 H15 L12.5,13.5 H1.5 Z" fill="#F0C870" stroke="#B88A2A"/><rect x="8.5" y="1.5" width="6" height="6" fill="#D8A868" stroke="#8C5A28"/><path d="M11.5,0 V8 M8,4.5 H15" stroke="#8C5A28"/></svg>
<svg class="a" style="left:48px;top:154px;" width="8" height="8" viewBox="0 0 8 8"><path d="M3.5,0.5 L7.5,7.5 H0 Z" fill="#FAD45A" stroke="#D78A1E" stroke-linejoin="round"/><rect x="3" y="2.5" width="1" height="3" fill="#000"/><rect x="3" y="6" width="1" height="1" fill="#000"/></svg>
<div class="t" style="left:69px;top:149px;">src</div>
<svg class="a" style="left:52px;top:167px;" width="9" height="9" viewBox="0 0 9 9"><defs><linearGradient id="exg" x1="0" y1="0" x2="0" y2="1"><stop offset="0" stop-color="#FFFFFF"/><stop offset="1" stop-color="#D2CDB8"/></linearGradient></defs><rect x="0.5" y="0.5" width="8" height="8" rx="1" fill="url(#exg)" stroke="#7F9DB9"/><rect x="2" y="4" width="5" height="1" fill="#000"/></svg>
<svg class="a" style="left:62px;top:171px;" width="6" height="1" viewBox="0 0 6 1"><rect x="0" y="0" width="1" height="1" fill="#A0A0A0"/><rect x="2" y="0" width="1" height="1" fill="#A0A0A0"/><rect x="4" y="0" width="1" height="1" fill="#A0A0A0"/></svg>
<svg class="a" style="left:68px;top:163px;" width="14" height="16" viewBox="0 0 14 16"><rect x="1.5" y="3.5" width="11" height="11" fill="#E4C490" stroke="#8C5A28"/><path d="M7,2 V16 M0,9 H14" stroke="#8C5A28" stroke-width="1.2"/><rect x="2.5" y="4.5" width="4" height="4" fill="#F0DCB0"/><rect x="7.5" y="9.5" width="4" height="4" fill="#F0DCB0"/></svg>
<svg class="a" style="left:67px;top:171px;" width="8" height="8" viewBox="0 0 8 8"><path d="M3.5,0.5 L7.5,7.5 H0 Z" fill="#FAD45A" stroke="#D78A1E" stroke-linejoin="round"/><rect x="3" y="2.5" width="1" height="3" fill="#000"/><rect x="3" y="6" width="1" height="1" fill="#000"/></svg>
<div class="t" style="left:88px;top:166px;">test</div>
<svg class="a" style="left:71px;top:184px;" width="9" height="9" viewBox="0 0 9 9"><defs><linearGradient id="exg" x1="0" y1="0" x2="0" y2="1"><stop offset="0" stop-color="#FFFFFF"/><stop offset="1" stop-color="#D2CDB8"/></linearGradient></defs><rect x="0.5" y="0.5" width="8" height="8" rx="1" fill="url(#exg)" stroke="#7F9DB9"/><rect x="2" y="4" width="5" height="1" fill="#000"/><rect x="4" y="2" width="1" height="5" fill="#000"/></svg>
<svg class="a" style="left:81px;top:188px;" width="6" height="1" viewBox="0 0 6 1"><rect x="0" y="0" width="1" height="1" fill="#A0A0A0"/><rect x="2" y="0" width="1" height="1" fill="#A0A0A0"/><rect x="4" y="0" width="1" height="1" fill="#A0A0A0"/></svg>
<svg class="a" style="left:89px;top:181px;" width="11" height="14" viewBox="0 0 11 14"><path d="M0.5,0.5 H7.5 L10.5,3.5 V13.5 H0.5 Z" fill="#EEF3FB" stroke="#A98834"/><path d="M0.5,10 V13.5 H10.5 V10" fill="none" stroke="#857238"/><path d="M7,0.5 L10.5,4 H7 Z" fill="#E8B860"/><path d="M5,3 H7 V9 Q7,11 5.5,11 H4 Q3,11 3,10 V9 H5 Z" fill="#2D62A8"/></svg>
<div class="t" style="left:107px;top:183px;letter-spacing:0.38px">ITestInterface.java</div>
<svg class="a" style="left:71px;top:201px;" width="9" height="9" viewBox="0 0 9 9"><defs><linearGradient id="exg" x1="0" y1="0" x2="0" y2="1"><stop offset="0" stop-color="#FFFFFF"/><stop offset="1" stop-color="#D2CDB8"/></linearGradient></defs><rect x="0.5" y="0.5" width="8" height="8" rx="1" fill="url(#exg)" stroke="#7F9DB9"/><rect x="2" y="4" width="5" height="1" fill="#000"/><rect x="4" y="2" width="1" height="5" fill="#000"/></svg>
<svg class="a" style="left:81px;top:205px;" width="6" height="1" viewBox="0 0 6 1"><rect x="0" y="0" width="1" height="1" fill="#A0A0A0"/><rect x="2" y="0" width="1" height="1" fill="#A0A0A0"/><rect x="4" y="0" width="1" height="1" fill="#A0A0A0"/></svg>
<svg class="a" style="left:89px;top:198px;" width="11" height="14" viewBox="0 0 11 14"><path d="M0.5,0.5 H7.5 L10.5,3.5 V13.5 H0.5 Z" fill="#EEF3FB" stroke="#A98834"/><path d="M0.5,10 V13.5 H10.5 V10" fill="none" stroke="#857238"/><path d="M7,0.5 L10.5,4 H7 Z" fill="#E8B860"/><path d="M5,3 H7 V9 Q7,11 5.5,11 H4 Q3,11 3,10 V9 H5 Z" fill="#2D62A8"/></svg>
<div class="t" style="left:107px;top:200px;">TestClass1.java</div>
<div class="a" style="left:105px;top:214px;width:84px;height:17px;background:#ECE9D8"></div>
<svg class="a" style="left:71px;top:218px;" width="9" height="9" viewBox="0 0 9 9"><defs><linearGradient id="exg" x1="0" y1="0" x2="0" y2="1"><stop offset="0" stop-color="#FFFFFF"/><stop offset="1" stop-color="#D2CDB8"/></linearGradient></defs><rect x="0.5" y="0.5" width="8" height="8" rx="1" fill="url(#exg)" stroke="#7F9DB9"/><rect x="2" y="4" width="5" height="1" fill="#000"/><rect x="4" y="2" width="1" height="5" fill="#000"/></svg>
<svg class="a" style="left:81px;top:222px;" width="6" height="1" viewBox="0 0 6 1"><rect x="0" y="0" width="1" height="1" fill="#A0A0A0"/><rect x="2" y="0" width="1" height="1" fill="#A0A0A0"/><rect x="4" y="0" width="1" height="1" fill="#A0A0A0"/></svg>
<svg class="a" style="left:89px;top:215px;" width="11" height="14" viewBox="0 0 11 14"><path d="M0.5,0.5 H7.5 L10.5,3.5 V13.5 H0.5 Z" fill="#EEF3FB" stroke="#A98834"/><path d="M0.5,10 V13.5 H10.5 V10" fill="none" stroke="#857238"/><path d="M7,0.5 L10.5,4 H7 Z" fill="#E8B860"/><path d="M5,3 H7 V9 Q7,11 5.5,11 H4 Q3,11 3,10 V9 H5 Z" fill="#2D62A8"/></svg>
<svg class="a" style="left:86px;top:222px;" width="8" height="8" viewBox="0 0 8 8"><path d="M3.5,0.5 L7.5,7.5 H0 Z" fill="#FAD45A" stroke="#D78A1E" stroke-linejoin="round"/><rect x="3" y="2.5" width="1" height="3" fill="#000"/><rect x="3" y="6" width="1" height="1" fill="#000"/></svg>
<div class="t" style="left:107px;top:217px;">TestClass2.java</div>
<svg class="a" style="left:71px;top:235px;" width="9" height="9" viewBox="0 0 9 9"><defs><linearGradient id="exg" x1="0" y1="0" x2="0" y2="1"><stop offset="0" stop-color="#FFFFFF"/><stop offset="1" stop-color="#D2CDB8"/></linearGradient></defs><rect x="0.5" y="0.5" width="8" height="8" rx="1" fill="url(#exg)" stroke="#7F9DB9"/><rect x="2" y="4" width="5" height="1" fill="#000"/><rect x="4" y="2" width="1" height="5" fill="#000"/></svg>
<svg class="a" style="left:81px;top:239px;" width="6" height="1" viewBox="0 0 6 1"><rect x="0" y="0" width="1" height="1" fill="#A0A0A0"/><rect x="2" y="0" width="1" height="1" fill="#A0A0A0"/><rect x="4" y="0" width="1" height="1" fill="#A0A0A0"/></svg>
<svg class="a" style="left:89px;top:232px;" width="11" height="14" viewBox="0 0 11 14"><path d="M0.5,0.5 H7.5 L10.5,3.5 V13.5 H0.5 Z" fill="#EEF3FB" stroke="#A98834"/><path d="M0.5,10 V13.5 H10.5 V10" fill="none" stroke="#857238"/><path d="M7,0.5 L10.5,4 H7 Z" fill="#E8B860"/><path d="M5,3 H7 V9 Q7,11 5.5,11 H4 Q3,11 3,10 V9 H5 Z" fill="#2D62A8"/></svg>
<div class="t" style="left:107px;top:234px;">TestClass3.java</div>
<svg class="a" style="left:33px;top:252px;" width="9" height="9" viewBox="0 0 9 9"><defs><linearGradient id="exg" x1="0" y1="0" x2="0" y2="1"><stop offset="0" stop-color="#FFFFFF"/><stop offset="1" stop-color="#D2CDB8"/></linearGradient></defs><rect x="0.5" y="0.5" width="8" height="8" rx="1" fill="url(#exg)" stroke="#7F9DB9"/><rect x="2" y="4" width="5" height="1" fill="#000"/><rect x="4" y="2" width="1" height="5" fill="#000"/></svg>
<svg class="a" style="left:43px;top:256px;" width="6" height="1" viewBox="0 0 6 1"><rect x="0" y="0" width="1" height="1" fill="#A0A0A0"/><rect x="2" y="0" width="1" height="1" fill="#A0A0A0"/><rect x="4" y="0" width="1" height="1" fill="#A0A0A0"/></svg>
<svg class="a" style="left:48px;top:248px;" width="16" height="16" viewBox="0 0 16 16"><rect x="1" y="5" width="8" height="2" fill="#1E5EB8"/><rect x="3" y="5" width="5" height="1" fill="#3A8AE0"/><rect x="2" y="7" width="9" height="3" fill="#1E9A4A"/><rect x="3" y="8" width="7" height="1" fill="#8ACC9A"/><rect x="1" y="10" width="11" height="4" fill="#D8502A"/><rect x="2" y="11" width="9" height="2" fill="#F0A070"/><path d="M10.5,3 L13,7 L14,10 L15,14" fill="none" stroke="#E8A010" stroke-width="2.6" stroke-linecap="round"/><path d="M11,3 L13,7 L14,10 L15,13" fill="none" stroke="#F8D040" stroke-width="1"/></svg>
<div class="t" style="left:69px;top:251px;letter-spacing:-0.3px">JRE System Library</div>
<svg class="a" style="left:33px;top:269px;" width="9" height="9" viewBox="0 0 9 9"><defs><linearGradient id="exg" x1="0" y1="0" x2="0" y2="1"><stop offset="0" stop-color="#FFFFFF"/><stop offset="1" stop-color="#D2CDB8"/></linearGradient></defs><rect x="0.5" y="0.5" width="8" height="8" rx="1" fill="url(#exg)" stroke="#7F9DB9"/><rect x="2" y="4" width="5" height="1" fill="#000"/><rect x="4" y="2" width="1" height="5" fill="#000"/></svg>
<svg class="a" style="left:43px;top:273px;" width="6" height="1" viewBox="0 0 6 1"><rect x="0" y="0" width="1" height="1" fill="#A0A0A0"/><rect x="2" y="0" width="1" height="1" fill="#A0A0A0"/><rect x="4" y="0" width="1" height="1" fill="#A0A0A0"/></svg>
<svg class="a" style="left:48px;top:265px;" width="16" height="16" viewBox="0 0 16 16"><rect x="1" y="5" width="8" height="2" fill="#1E5EB8"/><rect x="3" y="5" width="5" height="1" fill="#3A8AE0"/><rect x="2" y="7" width="9" height="3" fill="#1E9A4A"/><rect x="3" y="8" width="7" height="1" fill="#8ACC9A"/><rect x="1" y="10" width="11" height="4" fill="#D8502A"/><rect x="2" y="11" width="9" height="2" fill="#F0A070"/><path d="M10.5,3 L13,7 L14,10 L15,14" fill="none" stroke="#E8A010" stroke-width="2.6" stroke-linecap="round"/><path d="M11,3 L13,7 L14,10 L15,13" fill="none" stroke="#F8D040" stroke-width="1"/></svg>
<div class="t" style="left:69px;top:268px;letter-spacing:-0.1px">Referenced Libraries</div>
<div class="t" style="left:69px;top:250px;"></div>
<div class="t" style="left:164px;top:251px;color:#957B4D">[jre6]</div>
<svg class="a" style="left:3px;top:5px;" width="16" height="16" viewBox="0 0 16 16"><defs><radialGradient id="ecl" cx="0.35" cy="0.3" r="0.8"><stop offset="0" stop-color="#E8E0F0"/><stop offset="0.5" stop-color="#8A7AB0"/><stop offset="1" stop-color="#2A2060"/></radialGradient></defs><circle cx="7" cy="7.5" r="6.8" fill="url(#ecl)"/><path d="M0.5,6.5 H14 M0.5,9 H14" stroke="#F0F0FF" stroke-width="1"/></svg>
<svg class="a" style="left:266px;top:84px;" width="11" height="14" viewBox="0 0 11 14"><path d="M0.5,0.5 H7.5 L10.5,3.5 V13.5 H0.5 Z" fill="#EEF3FB" stroke="#A98834"/><path d="M0.5,10 V13.5 H10.5 V10" fill="none" stroke="#857238"/><path d="M7,0.5 L10.5,4 H7 Z" fill="#E8B860"/><path d="M5,3 H7 V9 Q7,11 5.5,11 H4 Q3,11 3,10 V9 H5 Z" fill="#2D62A8"/></svg>
<div class="t" style="left:282px;top:86px;letter-spacing:0.42px">ITestInterface.java</div>
<svg class="a" style="left:411px;top:84px;" width="11" height="14" viewBox="0 0 11 14"><path d="M0.5,0.5 H7.5 L10.5,3.5 V13.5 H0.5 Z" fill="#EEF3FB" stroke="#A98834"/><path d="M0.5,10 V13.5 H10.5 V10" fill="none" stroke="#857238"/><path d="M7,0.5 L10.5,4 H7 Z" fill="#E8B860"/><path d="M5,3 H7 V9 Q7,11 5.5,11 H4 Q3,11 3,10 V9 H5 Z" fill="#2D62A8"/></svg>
<div class="t" style="left:428px;top:86px;">TestClass1.java</div>
<svg class="a" style="left:538px;top:84px;" width="11" height="14" viewBox="0 0 11 14"><path d="M0.5,0.5 H7.5 L10.5,3.5 V13.5 H0.5 Z" fill="#EEF3FB" stroke="#A98834"/><path d="M0.5,10 V13.5 H10.5 V10" fill="none" stroke="#857238"/><path d="M7,0.5 L10.5,4 H7 Z" fill="#E8B860"/><path d="M5,3 H7 V9 Q7,11 5.5,11 H4 Q3,11 3,10 V9 H5 Z" fill="#2D62A8"/></svg>
<svg class="a" style="left:534px;top:92px;" width="8" height="8" viewBox="0 0 8 8"><path d="M3.5,0.5 L7.5,7.5 H0 Z" fill="#FAD45A" stroke="#D78A1E" stroke-linejoin="round"/><rect x="3" y="2.5" width="1" height="3" fill="#000"/><rect x="3" y="6" width="1" height="1" fill="#000"/></svg>
<div class="t" style="left:555px;top:86px;">TestClass2.java</div>
<svg class="a" style="left:640px;top:86px;" width="10" height="10" viewBox="0 0 10 10"><path d="M1.5,1.5 L8.5,8.5 M8.5,1.5 L1.5,8.5" stroke="#8C8A80" stroke-width="3" stroke-linecap="square"/><path d="M1.5,1.5 L8.5,8.5 M8.5,1.5 L1.5,8.5" stroke="#FFFFFF" stroke-width="1.2" stroke-linecap="square"/></svg>
<svg class="a" style="left:1049px;top:84px;" width="10" height="4" viewBox="0 0 10 4"><rect x="0.5" y="0.5" width="9" height="3" fill="#FFF" stroke="#6E6B5E"/></svg>
<svg class="a" style="left:1067px;top:84px;" width="10" height="10" viewBox="0 0 10 10"><rect x="0.5" y="0.5" width="9" height="9" fill="#FFF" stroke="#6E6B5E"/><rect x="1" y="2" width="8" height="1" fill="#6E6B5E"/></svg>
<div class="a" style="left:262px;top:105px;width:12px;height:496px;background:#ECE9D8"></div>
<div class="a" style="left:291px;top:105px;width:1px;height:479px;background:#ECE9D8"></div>
<div class="a" style="left:292px;top:105px;width:759px;height:17px;background:#E8F2FE"></div>
<div class="a" style="left:292px;top:105px;width:2px;height:17px;background:#000"></div>
<div class="a" style="left:1051px;top:105px;width:16px;height:479px;background:linear-gradient(to right,#F3F1EC,#FEFEFB)"></div>
<div class="a" style="left:1052px;top:106px;width:14px;height:15px;border:1px solid #FFF;border-radius:2px;background:#EEEDE5"></div>
<svg class="a" style="left:1055px;top:110px;" width="9" height="6" viewBox="0 0 9 6"><path d="M0.5,5 L4.5,1 L8.5,5" fill="none" stroke="#C3C3C3" stroke-width="2"/></svg>
<div class="a" style="left:1052px;top:568px;width:14px;height:15px;border:1px solid #FFF;border-radius:2px;background:#EEEDE5"></div>
<svg class="a" style="left:1055px;top:573px;" width="9" height="6" viewBox="0 0 9 6"><path d="M0.5,1 L4.5,5 L8.5,1" fill="none" stroke="#C3C3C3" stroke-width="2"/></svg>
<div class="a" style="left:292px;top:584px;width:759px;height:17px;background:linear-gradient(to bottom,#F3F1EC,#FEFEFB)"></div>
<div class="a" style="left:293px;top:585px;width:15px;height:15px;border:1px solid #FFF;border-radius:2px;background:#EEEDE5"></div>
<svg class="a" style="left:298px;top:588px;" width="6" height="9" viewBox="0 0 6 9"><path d="M5,0.5 L1,4.5 L5,8.5" fill="none" stroke="#C3C3C3" stroke-width="2"/></svg>
<div class="a" style="left:1035px;top:585px;width:15px;height:15px;border:1px solid #FFF;border-radius:2px;background:#EEEDE5"></div>
<svg class="a" style="left:1040px;top:588px;" width="6" height="9" viewBox="0 0 6 9"><path d="M1,0.5 L5,4.5 L1,8.5" fill="none" stroke="#C3C3C3" stroke-width="2"/></svg>
<div class="a" style="left:262px;top:584px;width:30px;height:17px;background:#ECE9D8"></div>
<div class="a" style="left:1051px;top:584px;width:16px;height:17px;background:#ECE9D8"></div>
<div class="a" style="left:1067px;top:105px;width:14px;height:496px;background:#ECE9D8"></div>
<div class="a" style="left:1070px;top:109px;width:8px;height:8px;background:#F8C820;border:1px solid #C8B070"></div>
<div class="a" style="left:1068px;top:121px;width:12px;height:1px;background:#B0AC98"></div>
<div class="a" style="left:1069px;top:265px;width:9px;height:5px;background:#FFF4CC;border:1px solid #F0C040"></div>
<div class="m" style="left:292px;top:106px">
<span class="kw">package</span> test;

<span class="kw">public</span> <span class="kw">class</span> TestClass2
{
    ITestInterface <span class="fld">testInterface</span>;

    <span class="kw">public</span> TestClass2()
    {
        <span class="kw">this</span>.<span class="fld">testInterface</span>=<span class="fld">testInterface</span>;
    }

    <span class="kw">public</span> <span class="kw">int</span> testMock()
    {
        <span class="kw">int</span> result=<span class="fld">testInterface</span>.test();
        <span class="kw">return</span> result;
    }
}</div>
<svg class="a" style="left:356px;top:272px;" width="258" height="3" viewBox="0 0 258 3"><path d="M0.5,2.5 L2.5,0.5 L4.5,2.5 L6.5,0.5 L8.5,2.5 L10.5,0.5 L12.5,2.5 L14.5,0.5 L16.5,2.5 L18.5,0.5 L20.5,2.5 L22.5,0.5 L24.5,2.5 L26.5,0.5 L28.5,2.5 L30.5,0.5 L32.5,2.5 L34.5,0.5 L36.5,2.5 L38.5,0.5 L40.5,2.5 L42.5,0.5 L44.5,2.5 L46.5,0.5 L48.5,2.5 L50.5,0.5 L52.5,2.5 L54.5,0.5 L56.5,2.5 L58.5,0.5 L60.5,2.5 L62.5,0.5 L64.5,2.5 L66.5,0.5 L68.5,2.5 L70.5,0.5 L72.5,2.5 L74.5,0.5 L76.5,2.5 L78.5,0.5 L80.5,2.5 L82.5,0.5 L84.5,2.5 L86.5,0.5 L88.5,2.5 L90.5,0.5 L92.5,2.5 L94.5,0.5 L96.5,2.5 L98.5,0.5 L100.5,2.5 L102.5,0.5 L104.5,2.5 L106.5,0.5 L108.5,2.5 L110.5,0.5 L112.5,2.5 L114.5,0.5 L116.5,2.5 L118.5,0.5 L120.5,2.5 L122.5,0.5 L124.5,2.5 L126.5,0.5 L128.5,2.5 L130.5,0.5 L132.5,2.5 L134.5,0.5 L136.5,2.5 L138.5,0.5 L140.5,2.5 L142.5,0.5 L144.5,2.5 L146.5,0.5 L148.5,2.5 L150.5,0.5 L152.5,2.5 L154.5,0.5 L156.5,2.5 L158.5,0.5 L160.5,2.5 L162.5,0.5 L164.5,2.5 L166.5,0.5 L168.5,2.5 L170.5,0.5 L172.5,2.5 L174.5,0.5 L176.5,2.5 L178.5,0.5 L180.5,2.5 L182.5,0.5 L184.5,2.5 L186.5,0.5 L188.5,2.5 L190.5,0.5 L192.5,2.5 L194.5,0.5 L196.5,2.5 L198.5,0.5 L200.5,2.5 L202.5,0.5 L204.5,2.5 L206.5,0.5 L208.5,2.5 L210.5,0.5 L212.5,2.5 L214.5,0.5 L216.5,2.5 L218.5,0.5 L220.5,2.5 L222.5,0.5 L224.5,2.5 L226.5,0.5 L228.5,2.5 L230.5,0.5 L232.5,2.5 L234.5,0.5 L236.5,2.5 L238.5,0.5 L240.5,2.5 L242.5,0.5 L244.5,2.5 L246.5,0.5 L248.5,2.5 L250.5,0.5 L252.5,2.5 L254.5,0.5 L256.5,2.5" fill="none" stroke="#F4C430" stroke-width="1"/></svg>
<svg class="a" style="left:282px;top:227px;" width="9" height="9" viewBox="0 0 9 9"><circle cx="4.5" cy="4.5" r="4" fill="#F0F4FA" stroke="#8AA0C0"/><rect x="2" y="4" width="5" height="1" fill="#5A7090"/></svg>
<svg class="a" style="left:282px;top:312px;" width="9" height="9" viewBox="0 0 9 9"><circle cx="4.5" cy="4.5" r="4" fill="#F0F4FA" stroke="#8AA0C0"/><rect x="2" y="4" width="5" height="1" fill="#5A7090"/></svg>
<svg class="a" style="left:262px;top:259px;" width="13" height="14" viewBox="0 0 13 14"><circle cx="4" cy="4.5" r="3.5" fill="#FFF8D0" stroke="#F0B830" stroke-width="1.2"/><path d="M3,8 V10 H5 V8" fill="none" stroke="#4A6AB0" stroke-width="1"/><g transform="translate(5,5)"><path d="M3.5,0.5 L7.5,7.5 H0 Z" fill="#FAD45A" stroke="#D78A1E" stroke-linejoin="round"/><rect x="3" y="2.5" width="1" height="3" fill="#000"/><rect x="3" y="6" width="1" height="1" fill="#000"/></g></svg>
<svg class="a" style="left:1094px;top:84px;" width="11" height="14" viewBox="0 0 11 14"><path d="M0.5,0.5 H10.5 V13 L8,11.5 L5.5,13.5 L3,11.5 L0.5,13 Z" fill="#F4F6FA" stroke="#4A5A78"/><rect x="0.5" y="9" width="10" height="3" fill="#A8C0E8"/><rect x="2" y="2" width="7" height="1" fill="#303848"/><rect x="2" y="4" width="7" height="1" fill="#303848"/><rect x="2" y="6" width="7" height="1" fill="#303848"/><rect x="2" y="8" width="7" height="1" fill="#303848"/></svg>
<div class="t" style="left:1111px;top:86px;">Task List</div>
<svg class="a" style="left:1160px;top:86px;" width="10" height="10" viewBox="0 0 10 10"><path d="M1.5,1.5 L8.5,8.5 M8.5,1.5 L1.5,8.5" stroke="#8C8A80" stroke-width="3" stroke-linecap="square"/><path d="M1.5,1.5 L8.5,8.5 M8.5,1.5 L1.5,8.5" stroke="#FFFFFF" stroke-width="1.2" stroke-linecap="square"/></svg>
<svg class="a" style="left:1241px;top:84px;" width="10" height="4" viewBox="0 0 10 4"><rect x="0.5" y="0.5" width="9" height="3" fill="#FFF" stroke="#6E6B5E"/></svg>
<svg class="a" style="left:1259px;top:84px;" width="10" height="10" viewBox="0 0 10 10"><rect x="0.5" y="0.5" width="9" height="9" fill="#FFF" stroke="#6E6B5E"/><rect x="1" y="2" width="8" height="1" fill="#6E6B5E"/></svg>
<svg class="a" style="left:1124px;top:108px;" width="16" height="16" viewBox="0 0 16 16"><path d="M0.5,3.5 H9.5 V15.5 H0.5 Z" fill="#F0F4FA" stroke="#8A98B0"/><path d="M10,-0.5 L11,2 L13.5,3 L11,4 L10,6.5 L9,4 L6.5,3 L9,2 Z" fill="#FCE88A" stroke="#C8961E" stroke-width="0.8"/></svg>
<svg class="a" style="left:1144px;top:108px;" width="16" height="16" viewBox="0 0 16 16"><rect x="7.5" y="1.5" width="7" height="13" rx="3" fill="#6A9AE0" stroke="#2E5EA8"/><path d="M2,6 Q4,1 9,3 M14,10 Q12,15 7,13" fill="none" stroke="#E8A020" stroke-width="2.5"/></svg>
<svg class="a" style="left:1171px;top:109px;" width="12" height="12" viewBox="0 0 12 12"><path d="M1.5,1 V12 M1.5,4.5 H4 M1.5,9.5 H4" stroke="#5A7AB0"/><rect x="0" y="0" width="3" height="3" fill="none" stroke="#5A7AB0"/><rect x="4.5" y="3.5" width="3" height="3" fill="none" stroke="#5A7AB0"/><rect x="4.5" y="8.5" width="3" height="3" fill="none" stroke="#5A7AB0"/><path d="M5,1.5 H11 M9,5 H11 M9,10 H11" stroke="#5A7AB0"/></svg>
<svg class="a" style="left:1190px;top:115px;" width="5" height="3" viewBox="0 0 5 3"><path d="M0,0 H5 L2.5,3 Z" fill="#000"/></svg>
<div class="a" style="left:1203px;top:107px;width:1px;height:19px;background:#C8C5B4"></div>
<svg class="a" style="left:1213px;top:110px;" width="13" height="13" viewBox="0 0 13 13"><rect x="0.5" y="0.5" width="9" height="9" fill="#E8F0FA" stroke="#8FA8C8"/><rect x="3.5" y="3.5" width="9" height="9" fill="#F4F8FD" stroke="#7893B8"/><rect x="5" y="7.5" width="6" height="2" fill="#1E4E9A"/></svg>
<svg class="a" style="left:1236px;top:110px;" width="14" height="14" viewBox="0 0 14 14"><circle cx="4.5" cy="4" r="3" fill="#C8C8C8" stroke="#B0B0B0" stroke-width="0.6"/><circle cx="10" cy="6" r="3" fill="#C8C8C8" stroke="#B0B0B0" stroke-width="0.6"/><circle cx="5.5" cy="10" r="3.2" fill="#6C5FB0"/><rect x="3" y="9.5" width="5" height="1" fill="#E0E0F0" opacity="0.7"/></svg>
<svg class="a" style="left:1259px;top:109px;" width="10" height="6" viewBox="0 0 10 6"><path d="M0.5,0.5 H9.5 L5,5 Z" fill="#FFF" stroke="#6E6B5E" stroke-linejoin="round"/></svg>
<div class="a" style="left:1090px;top:128px;width:183px;height:1px;background:#A5A28E"></div>
<div class="t" style="left:1092px;top:139px;">Find:</div>
<div class="a" style="left:1122px;top:135px;width:69px;height:19px;background:#fff;border:1px solid #7F9DB9"></div>
<svg class="a" style="left:1228px;top:141px;" width="6" height="10" viewBox="0 0 6 10"><path d="M0,0 L5,5 L0,10 Z" fill="#202020"/></svg>
<div class="t" style="left:1241px;top:139px;color:#1F4FA8">All</div>
<svg class="a" style="left:1264px;top:141px;" width="6" height="10" viewBox="0 0 6 10"><path d="M0,0 L5,5 L0,10 Z" fill="#202020"/></svg>
<div class="a" style="left:1090px;top:161px;width:183px;height:16px;background:#F3F1E6"></div>
<div class="a" style="left:1090px;top:177px;width:183px;height:161px;background:#fff"></div>
<svg class="a" style="left:1128px;top:161px;" width="16" height="16" viewBox="0 0 16 16"><path d="M0.5,2.5 H5 L6,4 H12.5 V12.5 H0.5 Z" fill="#F8D880" stroke="#C08A2A"/><path d="M2.5,6.5 H15 L12.5,12.5 H0.5 Z" fill="#FBE2A0" stroke="#C08A2A"/><circle cx="12" cy="13" r="2.5" fill="#C8E0F8" stroke="#5A8AC8"/></svg>
<div class="t" style="left:1147px;top:163px;">Uncategorized</div>
<svg class="a" style="left:1093px;top:348px;" width="13" height="14" viewBox="0 0 13 14"><rect x="0.5" y="0.5" width="5" height="5" fill="#C8E0F8" stroke="#1E5EAA"/><rect x="0.5" y="8.5" width="5" height="5" fill="#C8E0F8" stroke="#1E5EAA"/><path d="M7,3 H12 M7,11 H12 M10,7 H12" stroke="#1E5EAA"/><rect x="7.5" y="5.5" width="2" height="2" fill="none" stroke="#1E5EAA"/></svg>
<div class="t" style="left:1111px;top:350px;">Outline</div>
<svg class="a" style="left:1153px;top:350px;" width="10" height="10" viewBox="0 0 10 10"><path d="M1.5,1.5 L8.5,8.5 M8.5,1.5 L1.5,8.5" stroke="#8C8A80" stroke-width="3" stroke-linecap="square"/><path d="M1.5,1.5 L8.5,8.5 M8.5,1.5 L1.5,8.5" stroke="#FFFFFF" stroke-width="1.2" stroke-linecap="square"/></svg>
<svg class="a" style="left:1241px;top:348px;" width="10" height="4" viewBox="0 0 10 4"><rect x="0.5" y="0.5" width="9" height="3" fill="#FFF" stroke="#6E6B5E"/></svg>
<svg class="a" style="left:1259px;top:348px;" width="10" height="10" viewBox="0 0 10 10"><rect x="0.5" y="0.5" width="9" height="9" fill="#FFF" stroke="#6E6B5E"/><rect x="1" y="2" width="8" height="1" fill="#6E6B5E"/></svg>
<svg class="a" style="left:1120px;top:373px;" width="14" height="14" viewBox="0 0 14 14"><circle cx="4.5" cy="4" r="3" fill="#C8C8C8" stroke="#B0B0B0" stroke-width="0.6"/><circle cx="10" cy="6" r="3" fill="#C8C8C8" stroke="#B0B0B0" stroke-width="0.6"/><circle cx="5.5" cy="10" r="3.2" fill="#9A9A9A"/><rect x="3" y="9.5" width="5" height="1" fill="#E0E0F0" opacity="0.7"/></svg>
<svg class="a" style="left:1141px;top:372px;" width="16" height="16" viewBox="0 0 16 16"><path d="M2.5,1 V14 M0.5,11 L2.5,14 L4.5,11" stroke="#404040" fill="none"/><text x="5" y="8" font-family="Liberation Sans" font-size="10" font-weight="bold" fill="#1E9A6A">a</text><text x="8" y="16" font-family="Liberation Sans" font-size="10" font-weight="bold" fill="#6A4AA8">z</text></svg>
<svg class="a" style="left:1166px;top:373px;" width="15" height="15" viewBox="0 0 15 15"><circle cx="7.5" cy="7.5" r="5.5" fill="#6AB0F0" stroke="#3A88D8" stroke-width="1.5"/><circle cx="7.5" cy="7.5" r="2.5" fill="#D8F0FF"/><path d="M1,1 L14,14" stroke="#1E3E88" stroke-width="1.5"/></svg>
<svg class="a" style="left:1189px;top:373px;" width="15" height="15" viewBox="0 0 15 15"><circle cx="6.5" cy="9" r="4" fill="#A0A0A0"/><path d="M1,3 L13,15" stroke="#1E3E88" stroke-width="1.5"/><text x="9" y="6" font-family="Liberation Sans" font-size="7" fill="#2E5EA8">S</text></svg>
<svg class="a" style="left:1215px;top:375px;" width="8" height="8" viewBox="0 0 8 8"><circle cx="4" cy="4" r="3.8" fill="#3EA04A" stroke="#2A7A34" stroke-width="0.6"/></svg>
<svg class="a" style="left:1236px;top:373px;" width="15" height="15" viewBox="0 0 15 15"><circle cx="6.5" cy="9" r="4" fill="#A0A0A0"/><path d="M1,3 L13,15" stroke="#1E3E88" stroke-width="1.5"/><text x="10" y="6" font-family="Liberation Sans" font-size="7" fill="#2E5EA8">L</text></svg>
<svg class="a" style="left:1259px;top:373px;" width="10" height="6" viewBox="0 0 10 6"><path d="M0.5,0.5 H9.5 L5,5 Z" fill="#FFF" stroke="#6E6B5E" stroke-linejoin="round"/></svg>
<div class="a" style="left:1090px;top:392px;width:183px;height:1px;background:#A5A28E"></div>
<div class="a" style="left:1090px;top:393px;width:183px;height:192px;background:#fff"></div>
<svg class="a" style="left:1104px;top:401px;" width="14" height="1" viewBox="0 0 14 1"><rect x="0" y="0" width="1" height="1" fill="#A0A0A0"/><rect x="2" y="0" width="1" height="1" fill="#A0A0A0"/><rect x="4" y="0" width="1" height="1" fill="#A0A0A0"/><rect x="6" y="0" width="1" height="1" fill="#A0A0A0"/><rect x="8" y="0" width="1" height="1" fill="#A0A0A0"/><rect x="10" y="0" width="1" height="1" fill="#A0A0A0"/><rect x="12" y="0" width="1" height="1" fill="#A0A0A0"/></svg>
<svg class="a" style="left:1104px;top:401px;" width="1" height="14" viewBox="0 0 1 14"><rect x="0" y="0" width="1" height="1" fill="#A0A0A0"/><rect x="0" y="2" width="1" height="1" fill="#A0A0A0"/><rect x="0" y="4" width="1" height="1" fill="#A0A0A0"/><rect x="0" y="6" width="1" height="1" fill="#A0A0A0"/><rect x="0" y="8" width="1" height="1" fill="#A0A0A0"/><rect x="0" y="10" width="1" height="1" fill="#A0A0A0"/><rect x="0" y="12" width="1" height="1" fill="#A0A0A0"/></svg>
<svg class="a" style="left:1119px;top:395px;" width="13" height="13" viewBox="0 0 13 13"><rect x="1.5" y="1.5" width="10" height="10" fill="#C8C4A8" stroke="#8A8670"/><path d="M6.5,0 V13 M0,6.5 H13" stroke="#6A6650"/><rect x="3" y="3" width="2" height="2" fill="#E8F0C8"/><rect x="8" y="8" width="2" height="2" fill="#E8F0C8"/></svg>
<div class="t" style="left:1145px;top:396px;">test</div>
<svg class="a" style="left:1100px;top:414px;" width="9" height="9" viewBox="0 0 9 9"><defs><linearGradient id="exg" x1="0" y1="0" x2="0" y2="1"><stop offset="0" stop-color="#FFFFFF"/><stop offset="1" stop-color="#D2CDB8"/></linearGradient></defs><rect x="0.5" y="0.5" width="8" height="8" rx="1" fill="url(#exg)" stroke="#7F9DB9"/><rect x="2" y="4" width="5" height="1" fill="#000"/></svg>
<svg class="a" style="left:1110px;top:418px;" width="8" height="1" viewBox="0 0 8 1"><rect x="0" y="0" width="1" height="1" fill="#A0A0A0"/><rect x="2" y="0" width="1" height="1" fill="#A0A0A0"/><rect x="4" y="0" width="1" height="1" fill="#A0A0A0"/><rect x="6" y="0" width="1" height="1" fill="#A0A0A0"/></svg>
<svg class="a" style="left:1118px;top:410px;" width="14" height="13" viewBox="0 0 14 13"><circle cx="7" cy="6.5" r="5" fill="none" stroke="#2E9A3E" stroke-width="2.6"/><rect x="8" y="5" width="6" height="3" fill="#FFF"/><path d="M8,4 L12,6.5 L8,9 Z" fill="#2E9A3E"/></svg>
<svg class="a" style="left:1118px;top:418px;" width="8" height="8" viewBox="0 0 8 8"><path d="M3.5,0.5 L7.5,7.5 H0 Z" fill="#FAD45A" stroke="#D78A1E" stroke-linejoin="round"/><rect x="3" y="2.5" width="1" height="3" fill="#000"/><rect x="3" y="6" width="1" height="1" fill="#000"/></svg>
<div class="t" style="left:1145px;top:413px;">TestClass2</div>
<svg class="a" style="left:1129px;top:427px;" width="1" height="44" viewBox="0 0 1 44"><rect x="0" y="0" width="1" height="1" fill="#A0A0A0"/><rect x="0" y="2" width="1" height="1" fill="#A0A0A0"/><rect x="0" y="4" width="1" height="1" fill="#A0A0A0"/><rect x="0" y="6" width="1" height="1" fill="#A0A0A0"/><rect x="0" y="8" width="1" height="1" fill="#A0A0A0"/><rect x="0" y="10" width="1" height="1" fill="#A0A0A0"/><rect x="0" y="12" width="1" height="1" fill="#A0A0A0"/><rect x="0" y="14" width="1" height="1" fill="#A0A0A0"/><rect x="0" y="16" width="1" height="1" fill="#A0A0A0"/><rect x="0" y="18" width="1" height="1" fill="#A0A0A0"/><rect x="0" y="20" width="1" height="1" fill="#A0A0A0"/><rect x="0" y="22" width="1" height="1" fill="#A0A0A0"/><rect x="0" y="24" width="1" height="1" fill="#A0A0A0"/><rect x="0" y="26" width="1" height="1" fill="#A0A0A0"/><rect x="0" y="28" width="1" height="1" fill="#A0A0A0"/><rect x="0" y="30" width="1" height="1" fill="#A0A0A0"/><rect x="0" y="32" width="1" height="1" fill="#A0A0A0"/><rect x="0" y="34" width="1" height="1" fill="#A0A0A0"/><rect x="0" y="36" width="1" height="1" fill="#A0A0A0"/><rect x="0" y="38" width="1" height="1" fill="#A0A0A0"/><rect x="0" y="40" width="1" height="1" fill="#A0A0A0"/><rect x="0" y="42" width="1" height="1" fill="#A0A0A0"/></svg>
<svg class="a" style="left:1129px;top:435px;" width="14" height="1" viewBox="0 0 14 1"><rect x="0" y="0" width="1" height="1" fill="#A0A0A0"/><rect x="2" y="0" width="1" height="1" fill="#A0A0A0"/><rect x="4" y="0" width="1" height="1" fill="#A0A0A0"/><rect x="6" y="0" width="1" height="1" fill="#A0A0A0"/><rect x="8" y="0" width="1" height="1" fill="#A0A0A0"/><rect x="10" y="0" width="1" height="1" fill="#A0A0A0"/><rect x="12" y="0" width="1" height="1" fill="#A0A0A0"/></svg>
<svg class="a" style="left:1129px;top:452px;" width="14" height="1" viewBox="0 0 14 1"><rect x="0" y="0" width="1" height="1" fill="#A0A0A0"/><rect x="2" y="0" width="1" height="1" fill="#A0A0A0"/><rect x="4" y="0" width="1" height="1" fill="#A0A0A0"/><rect x="6" y="0" width="1" height="1" fill="#A0A0A0"/><rect x="8" y="0" width="1" height="1" fill="#A0A0A0"/><rect x="10" y="0" width="1" height="1" fill="#A0A0A0"/><rect x="12" y="0" width="1" height="1" fill="#A0A0A0"/></svg>
<svg class="a" style="left:1129px;top:469px;" width="14" height="1" viewBox="0 0 14 1"><rect x="0" y="0" width="1" height="1" fill="#A0A0A0"/><rect x="2" y="0" width="1" height="1" fill="#A0A0A0"/><rect x="4" y="0" width="1" height="1" fill="#A0A0A0"/><rect x="6" y="0" width="1" height="1" fill="#A0A0A0"/><rect x="8" y="0" width="1" height="1" fill="#A0A0A0"/><rect x="10" y="0" width="1" height="1" fill="#A0A0A0"/><rect x="12" y="0" width="1" height="1" fill="#A0A0A0"/></svg>
<svg class="a" style="left:1147px;top:432px;" width="8" height="6" viewBox="0 0 8 6"><path d="M4,0.8 L7.6,5.5 H0.4 Z" fill="#FFF" stroke="#1E5EBA" stroke-width="1.6" stroke-linejoin="round"/></svg>
<div class="t" style="left:1169px;top:430px;">testInterface</div>
<div class="a" style="left:1230px;top:430px;width:43px;height:14px;overflow:hidden"><div class="t" style="left:5px;top:0;color:#957B4D">: ITestInterface</div></div>
<svg class="a" style="left:1147px;top:449px;" width="8" height="8" viewBox="0 0 8 8"><circle cx="4" cy="4" r="3.8" fill="#6CBC6C" stroke="#2E8A3E" stroke-width="0.8"/></svg>
<svg class="a" style="left:1143px;top:452px;" width="8" height="8" viewBox="0 0 8 8"><path d="M3.5,0.5 L7.5,7.5 H0 Z" fill="#FAD45A" stroke="#D78A1E" stroke-linejoin="round"/><rect x="3" y="2.5" width="1" height="3" fill="#000"/><rect x="3" y="6" width="1" height="1" fill="#000"/></svg>
<div class="t" style="left:1158px;top:441px;color:#2A8A3A;font-size:9px;font-weight:bold">C</div>
<div class="t" style="left:1169px;top:447px;">TestClass2()</div>
<svg class="a" style="left:1147px;top:466px;" width="8" height="8" viewBox="0 0 8 8"><circle cx="4" cy="4" r="3.8" fill="#6CBC6C" stroke="#2E8A3E" stroke-width="0.8"/></svg>
<div class="t" style="left:1169px;top:464px;">testMock()</div>
<div class="a" style="left:1090px;top:585px;width:183px;height:16px;background:#F4F3EE"></div>
<div class="a" style="left:1090px;top:585px;width:16px;height:15px;border:1px solid #FFF;border-radius:3px;background:linear-gradient(#D4E2FA,#B0C8F4);box-shadow:inset 0 0 0 1px #B4C8EE"></div>
<svg class="a" style="left:1094px;top:588px;" width="6" height="9" viewBox="0 0 6 9"><path d="M5,0.5 L1,4.5 L5,8.5" fill="none" stroke="#4D6185" stroke-width="2"/></svg>
<div class="a" style="left:1108px;top:585px;width:117px;height:15px;border:1px solid #FFF;border-radius:3px;background:linear-gradient(#D2E0FA,#B4CAF5);box-shadow:inset 0 0 0 1px #A8BEEA"></div>
<div class="a" style="left:1163px;top:589px;width:8px;height:7px;background:repeating-linear-gradient(to right,#8AA4D8 0 1px,#EEF3FD 1px 2px)"></div>
<div class="a" style="left:1257px;top:585px;width:16px;height:15px;border:1px solid #FFF;border-radius:3px;background:linear-gradient(#D4E2FA,#B0C8F4);box-shadow:inset 0 0 0 1px #B4C8EE"></div>
<svg class="a" style="left:1262px;top:588px;" width="6" height="9" viewBox="0 0 6 9"><path d="M1,0.5 L5,4.5 L1,8.5" fill="none" stroke="#4D6185" stroke-width="2"/></svg>
<svg class="a" style="left:264px;top:612px;" width="15" height="15" viewBox="0 0 15 15"><rect x="0.5" y="0.5" width="14" height="14" fill="#FFF" stroke="#5A6A88"/><path d="M0.5,7.5 H10" stroke="#5A6A88"/><path d="M10.5,0.5 V14.5" stroke="#5A6A88"/><circle cx="5" cy="4" r="2.5" fill="#E04040"/><path d="M2.5,12 L5,9 L7.5,12 Z" fill="#F0A020"/></svg>
<div class="t" style="left:282px;top:614px;">Problems</div>
<svg class="a" style="left:334px;top:614px;" width="10" height="10" viewBox="0 0 10 10"><path d="M1.5,1.5 L8.5,8.5 M8.5,1.5 L1.5,8.5" stroke="#8C8A80" stroke-width="3" stroke-linecap="square"/><path d="M1.5,1.5 L8.5,8.5 M8.5,1.5 L1.5,8.5" stroke="#FFFFFF" stroke-width="1.2" stroke-linecap="square"/></svg>
<div class="t" style="left:372px;top:614px;color:#2E5EA8;font-weight:bold">@</div>
<div class="t" style="left:389px;top:614px;">Javadoc</div>
<svg class="a" style="left:437px;top:612px;" width="13" height="15" viewBox="0 0 13 15"><path d="M0.5,0.5 H9.5 L12.5,3.5 V14.5 H0.5 Z" fill="#FCF0C8" stroke="#C89848"/><circle cx="7" cy="8" r="4.5" fill="#D8E8F8" stroke="#3A6AB8"/><path d="M5,7 H9 M5,9 H9" stroke="#3A6AB8"/></svg>
<div class="t" style="left:456px;top:614px;">Declaration</div>
<svg class="a" style="left:1199px;top:612px;" width="14" height="14" viewBox="0 0 14 14"><circle cx="4.5" cy="4" r="3" fill="#C8C8C8" stroke="#B0B0B0" stroke-width="0.6"/><circle cx="10" cy="6" r="3" fill="#C8C8C8" stroke="#B0B0B0" stroke-width="0.6"/><circle cx="5.5" cy="10" r="3.2" fill="#6C5FB0"/><rect x="3" y="9.5" width="5" height="1" fill="#E0E0F0" opacity="0.7"/></svg>
<svg class="a" style="left:1222px;top:612px;" width="10" height="6" viewBox="0 0 10 6"><path d="M0.5,0.5 H9.5 L5,5 Z" fill="#FFF" stroke="#6E6B5E" stroke-linejoin="round"/></svg>
<svg class="a" style="left:1241px;top:612px;" width="10" height="4" viewBox="0 0 10 4"><rect x="0.5" y="0.5" width="9" height="3" fill="#FFF" stroke="#6E6B5E"/></svg>
<svg class="a" style="left:1259px;top:612px;" width="10" height="10" viewBox="0 0 10 10"><rect x="0.5" y="0.5" width="9" height="9" fill="#FFF" stroke="#6E6B5E"/><rect x="1" y="2" width="8" height="1" fill="#6E6B5E"/></svg>
<div class="t" style="left:262px;top:634px;">0 errors, 1 warning, 0 others</div>
<div class="a" style="left:262px;top:647px;width:1011px;height:1px;background:#A5A28E"></div>
<div class="a" style="left:262px;top:648px;width:1011px;height:18px;background:#EBEADB"></div>
<div class="a" style="left:262px;top:665px;width:1011px;height:1px;background:#D6D2C2"></div>
<div class="a" style="left:262px;top:666px;width:1011px;height:1px;background:#CBC7B8"></div>
<div class="a" style="left:511px;top:650px;width:1px;height:14px;background:#C7C5B2"></div>
<div class="a" style="left:512px;top:650px;width:1px;height:14px;background:#FFF"></div>
<div class="a" style="left:590px;top:650px;width:1px;height:14px;background:#C7C5B2"></div>
<div class="a" style="left:591px;top:650px;width:1px;height:14px;background:#FFF"></div>
<div class="a" style="left:694px;top:650px;width:1px;height:14px;background:#C7C5B2"></div>
<div class="a" style="left:695px;top:650px;width:1px;height:14px;background:#FFF"></div>
<div class="a" style="left:748px;top:650px;width:1px;height:14px;background:#C7C5B2"></div>
<div class="a" style="left:749px;top:650px;width:1px;height:14px;background:#FFF"></div>
<div class="a" style="left:827px;top:650px;width:1px;height:14px;background:#C7C5B2"></div>
<div class="a" style="left:828px;top:650px;width:1px;height:14px;background:#FFF"></div>
<div class="t" style="left:273px;top:652px;">Description</div>
<svg class="a" style="left:336px;top:654px;" width="9" height="5" viewBox="0 0 9 5"><path d="M0,5 L4.5,0 L9,5 Z" fill="#ACA899"/></svg>
<div class="t" style="left:520px;top:652px;">Resource</div>
<div class="t" style="left:599px;top:652px;">Path</div>
<div class="t" style="left:703px;top:652px;">Locat...</div>
<div class="t" style="left:757px;top:652px;">Type</div>
<div class="a" style="left:262px;top:667px;width:1011px;height:101px;background:#fff"></div>
<div class="a" style="left:262px;top:667px;width:249px;height:101px;background:#F7F7F7"></div>
<div class="a" style="left:262px;top:684px;width:1011px;height:1px;background:#F0EFE8"></div>
<div class="a" style="left:262px;top:701px;width:1011px;height:1px;background:#F0EFE8"></div>
<div class="a" style="left:262px;top:718px;width:1011px;height:1px;background:#F0EFE8"></div>
<div class="a" style="left:262px;top:735px;width:1011px;height:1px;background:#F0EFE8"></div>
<div class="a" style="left:262px;top:752px;width:1011px;height:1px;background:#F0EFE8"></div>
<div class="a" style="left:511px;top:667px;width:1px;height:101px;background:#F0EFE8"></div>
<div class="a" style="left:590px;top:667px;width:1px;height:101px;background:#F0EFE8"></div>
<div class="a" style="left:694px;top:667px;width:1px;height:101px;background:#F0EFE8"></div>
<div class="a" style="left:748px;top:667px;width:1px;height:101px;background:#F0EFE8"></div>
<div class="a" style="left:827px;top:667px;width:1px;height:101px;background:#F0EFE8"></div>
<svg class="a" style="left:269px;top:672px;" width="9" height="9" viewBox="0 0 9 9"><defs><linearGradient id="exg" x1="0" y1="0" x2="0" y2="1"><stop offset="0" stop-color="#FFFFFF"/><stop offset="1" stop-color="#D2CDB8"/></linearGradient></defs><rect x="0.5" y="0.5" width="8" height="8" rx="1" fill="url(#exg)" stroke="#7F9DB9"/><rect x="2" y="4" width="5" height="1" fill="#000"/><rect x="4" y="2" width="1" height="5" fill="#000"/></svg>
<svg class="a" style="left:286px;top:670px;" width="11" height="10" viewBox="0 0 11 10"><path d="M5.5,0.5 L10.5,9.5 H0.5 Z" fill="#FAD45A" stroke="#D78A1E" stroke-linejoin="round"/><rect x="5" y="3" width="1" height="4" fill="#000"/><rect x="5" y="8" width="1" height="1" fill="#000"/></svg>
<div class="t" style="left:304px;top:671px;">Warnings (1 item)</div>
<svg class="a" style="left:6px;top:776px;" width="3" height="15" viewBox="0 0 3 15"><rect x="1" y="1" width="2" height="2" fill="#FFFFFF"/><rect x="0" y="0" width="2" height="2" fill="#A8A596"/><rect x="0" y="0" width="1" height="1" fill="#707068"/><rect x="1" y="5" width="2" height="2" fill="#FFFFFF"/><rect x="0" y="4" width="2" height="2" fill="#A8A596"/><rect x="0" y="4" width="1" height="1" fill="#707068"/><rect x="1" y="9" width="2" height="2" fill="#FFFFFF"/><rect x="0" y="8" width="2" height="2" fill="#A8A596"/><rect x="0" y="8" width="1" height="1" fill="#707068"/><rect x="1" y="13" width="2" height="2" fill="#FFFFFF"/><rect x="0" y="12" width="2" height="2" fill="#A8A596"/><rect x="0" y="12" width="1" height="1" fill="#707068"/></svg>
<svg class="a" style="left:19px;top:778px;" width="13" height="13" viewBox="0 0 13 13"><rect x="0.5" y="1.5" width="5" height="10" fill="#EAF3FC" stroke="#8C8060"/><rect x="1" y="2" width="4" height="2" fill="#4A86CC"/><path d="M9,0.0 L10,2.5 L12.5,3.5 L10,4.5 L9,7.0 L8,4.5 L5.5,3.5 L8,2.5 Z" fill="#FCE88A" stroke="#C8961E" stroke-width="0.8"/></svg>
<div class="a" style="left:768px;top:773px;width:1px;height:24px;background:#ACA899"></div>
<div class="a" style="left:769px;top:773px;width:1px;height:24px;background:#FFF"></div>
<div class="a" style="left:856px;top:773px;width:1px;height:24px;background:#ACA899"></div>
<div class="a" style="left:857px;top:773px;width:1px;height:24px;background:#FFF"></div>
<div class="a" style="left:940px;top:773px;width:1px;height:24px;background:#ACA899"></div>
<div class="a" style="left:941px;top:773px;width:1px;height:24px;background:#FFF"></div>
<div class="t" style="left:775px;top:779px;">Writable</div>
<div class="t" style="left:863px;top:779px;">Smart Insert</div>
<div class="t" style="left:948px;top:779px;">1 : 1</div>
<svg class="a" style="left:1027px;top:776px;" width="3" height="15" viewBox="0 0 3 15"><rect x="1" y="1" width="2" height="2" fill="#FFFFFF"/><rect x="0" y="0" width="2" height="2" fill="#A8A596"/><rect x="0" y="0" width="1" height="1" fill="#707068"/><rect x="1" y="5" width="2" height="2" fill="#FFFFFF"/><rect x="0" y="4" width="2" height="2" fill="#A8A596"/><rect x="0" y="4" width="1" height="1" fill="#707068"/><rect x="1" y="9" width="2" height="2" fill="#FFFFFF"/><rect x="0" y="8" width="2" height="2" fill="#A8A596"/><rect x="0" y="8" width="1" height="1" fill="#707068"/><rect x="1" y="13" width="2" height="2" fill="#FFFFFF"/><rect x="0" y="12" width="2" height="2" fill="#A8A596"/><rect x="0" y="12" width="1" height="1" fill="#707068"/></svg>
</body></html>
